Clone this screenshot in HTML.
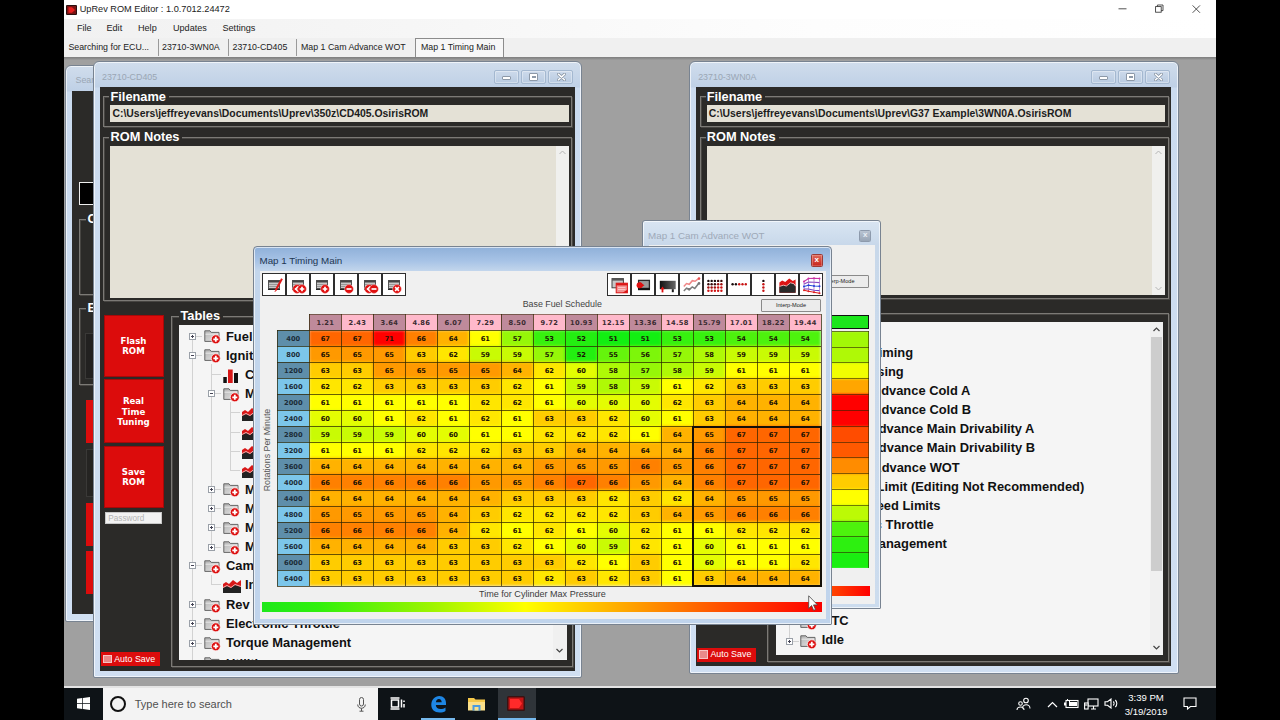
<!DOCTYPE html><html><head><meta charset="utf-8"><title>UpRev ROM Editor</title><style>
*{box-sizing:border-box;margin:0;padding:0}
html,body{width:1280px;height:720px;overflow:hidden;background:#000;font-family:"Liberation Sans",Arial,sans-serif}
.a{position:absolute}
.t{position:absolute;white-space:pre;line-height:1}
#screen{position:absolute;left:64px;top:0;width:1152px;height:720px;overflow:hidden;background:#a0a0a0}
#titlebar{left:0;top:0;width:1152px;height:19px;background:#fff}
#menubar{left:0;top:19px;width:1152px;height:19px;background:linear-gradient(90deg,#f1f1f1 0,#f6f6f6 30%,#fdfdfd 65%,#fff 100%)}
#tabbar{left:0;top:38px;width:1152px;height:19px;background:#f0f0f0}
.tab{position:absolute;top:0;height:19px;font-size:8.8px;color:#222;line-height:19px;white-space:pre}
.tsep{position:absolute;top:1px;width:1px;height:17px;background:#9a9a9a}
.win{position:absolute;border:1px solid #788391;border-radius:6px 6px 2px 2px;box-shadow:inset 0 0 0 1px rgba(255,255,255,.65)}
.win.in{background:linear-gradient(#d0ddec 0,#bfd0e6 25px,#cbdbef 26px,#d0dff2 100%)}
.win.act{background:linear-gradient(#8fb0d9 0,#a7c3e6 14px,#c3d6ec 24px,#c0d4ec 100%)}
.cap{position:absolute;border:1px solid #a4b8d0;border-radius:2px;background:linear-gradient(#cddaeb,#b9cbe1);box-shadow:inset 0 0 0 1px rgba(255,255,255,.35)}
.dark{position:absolute;background:#2b2a28;overflow:hidden}
.gb{position:absolute;border:1px solid #7c7a76;box-shadow:1px 1px 0 #474542, inset 1px 1px 0 #474542}
.gbl{position:absolute;background:#2b2a28;color:#fff;font-weight:700;font-size:12.8px;line-height:13px;height:13px;white-space:pre;padding:0 3px 0 1px}
.field{position:absolute;background:#e4e1d6}
.rbtn{position:absolute;background:#dc0c0c;color:#fff;font-family:"DejaVu Sans","Liberation Sans",sans-serif;font-weight:700;font-size:8.6px;line-height:10.9px;padding-right:2px;padding-top:1px;text-align:center;display:flex;align-items:center;justify-content:center;border:1px solid #a80808}
.tree{position:absolute;background:#f5f5f5;overflow:hidden}
.ti{position:absolute;font-weight:700;font-size:12.9px;line-height:14px;height:14px;color:#111;white-space:pre}
.exp{position:absolute;width:7px;height:7px;border:1px solid #9aa0a8;background:#fff}
.exp:before{content:"";position:absolute;left:1px;top:2px;width:3px;height:1px;background:#445}
.exp.p:after{content:"";position:absolute;left:2px;top:1px;width:1px;height:3px;background:#445}
.tb{position:absolute;width:24px;height:23.5px;background:#fff;border:1px solid #2e2e2e}
.cell{position:absolute;font-family:"DejaVu Sans","Liberation Sans",sans-serif;font-weight:700;font-size:6.7px;line-height:18.2px;overflow:hidden;text-align:center;color:#1c1204;white-space:pre}
</style></head><body><svg width="0" height="0" style="position:absolute"><defs><linearGradient id="fg" x1="0" y1="0" x2="1" y2="1"><stop offset="0" stop-color="#b4b4b4"/><stop offset="1" stop-color="#e6e6e6"/></linearGradient><linearGradient id="gk" x1="0" x2="1"><stop offset="0" stop-color="#111"/><stop offset="1" stop-color="#666"/></linearGradient></defs></svg><div id="screen">
<div class="a" id="titlebar">
<svg class="a" style="left:1.5px;top:4.5px" width="11" height="10" viewBox="0 0 11 10"><rect width="11" height="10" rx="1" fill="#2a1010"/><rect x="1" y="1" width="9" height="8" fill="#7a1414"/><path d="M2.5 2.2h3.5l3 2.8-3 2.8H2.5z" fill="#e82020"/></svg>
<div class="t" style="left:15.7px;top:5px;font-size:9.2px;color:#222">UpRev ROM Editor : 1.0.7012.24472</div>
<svg class="a" style="left:1010px;top:0" width="142" height="19" viewBox="0 0 142 19" fill="none" stroke="#333" stroke-width="0.85"><path d="M44.5 8.8h8"/><rect x="81.6" y="6.6" width="5.6" height="5.6"/><path d="M83.4 6.6v-1.6h5.6v5.6h-1.8"/><path d="M118.6 5.4l7.4 7.4M126 5.4l-7.4 7.4"/></svg>
</div>
<div class="a" id="menubar">
<div class="t" style="left:13px;top:5px;font-size:9.1px;color:#222">File</div>
<div class="t" style="left:42.5px;top:5px;font-size:9.1px;color:#222">Edit</div>
<div class="t" style="left:74px;top:5px;font-size:9.1px;color:#222">Help</div>
<div class="t" style="left:109px;top:5px;font-size:9.1px;color:#222">Updates</div>
<div class="t" style="left:158.5px;top:5px;font-size:9.1px;color:#222">Settings</div>
</div>
<div class="a" id="tabbar">
<div class="a" style="left:351px;top:0;width:89px;height:19px;background:#f7f7f7;border:1px solid #8c8c8c;border-bottom:none"></div>
<div class="tab" style="left:4.4px">Searching for ECU...</div>
<div class="tab" style="left:98px">23710-3WN0A</div>
<div class="tab" style="left:168.5px">23710-CD405</div>
<div class="tab" style="left:237px">Map 1 Cam Advance WOT</div>
<div class="tab" style="left:357px">Map 1 Timing Main</div>
<div class="tsep" style="left:93.5px"></div>
<div class="tsep" style="left:164px"></div>
<div class="tsep" style="left:232px"></div>
</div>
<div class="a" style="left:0;top:57px;width:1152px;height:3px;background:linear-gradient(#7e7e7e,#8e8e8e 60%,#a0a0a0)"></div>
<div class="win in" style="left:1.2px;top:65px;width:74.8px;height:557px">
<div class="t" style="left:9.3px;top:10.3px;font-size:8.9px;color:#9aa6b4">Searching for ECU...</div>
<div class="dark" style="left:6.3px;top:25px;width:61.8px;height:522.8px">
<div class="a" style="left:6.5px;top:91px;width:40px;height:23px;background:#000;border:1px solid #eee"></div>
<div class="gb" style="left:6.5px;top:127.5px;width:60px;height:76.5px"></div><div class="gbl" style="left:14.0px;top:121px">Connection</div>
<div class="gb" style="left:6.5px;top:216.5px;width:60px;height:77px"></div><div class="gbl" style="left:14.0px;top:209.8px">ECU</div>
<div class="a" style="left:12.5px;top:241.5px;width:40px;height:46.5px;background:#222120;border:1px solid #3a3937"></div>
<div class="a" style="left:13.5px;top:309px;width:40px;height:42.5px;background:#dc0c0c"></div>
<div class="a" style="left:13.5px;top:411.5px;width:40px;height:43.5px;background:#dc0c0c"></div>
<div class="a" style="left:13.5px;top:460px;width:40px;height:43px;background:#dc0c0c"></div>
<div class="a" style="left:13.5px;top:358px;width:40px;height:48px;background:#252422;border:1px solid #3a3937"></div>
</div></div>
<div class="win in" style="left:625px;top:60.8px;width:490px;height:612.8000000000001px">
<div class="t" style="left:8.2px;top:10.8px;font-size:8.9px;color:#9aa6b4">23710-3WN0A</div>
<div class="cap" style="left:400.8px;top:8.1px;width:25px;height:14.3px">
<div class="a" style="left:7.5px;top:5.5px;width:9px;height:3.6px;border:1px solid #8d99a8;background:#fff;border-radius:1px"></div>
</div>
<div class="cap" style="left:427.8px;top:8.1px;width:25px;height:14.3px">
<div class="a" style="left:7.5px;top:2.2px;width:9px;height:7.5px;border:1px solid #8d99a8;background:#fff;border-radius:1px"></div><div class="a" style="left:10px;top:4.8px;width:4px;height:2.6px;border:1px solid #8d99a8"></div>
</div>
<div class="cap" style="left:455px;top:8.1px;width:25px;height:14.3px">
<svg class="a" style="left:7.5px;top:2px" width="9" height="8" viewBox="0 0 9 8"><path d="M1.5 1.2l6 5.6M7.5 1.2l-6 5.6" stroke="#8d99a8" stroke-width="3" stroke-linecap="round"/><path d="M1.5 1.2l6 5.6M7.5 1.2l-6 5.6" stroke="#fff" stroke-width="1.5" stroke-linecap="round"/></svg>
</div>
<div class="dark" style="left:6.2px;top:25.1px;width:475.29999999999995px;height:579.5px">
<div class="gb" style="left:3.5px;top:9.5px;width:469.29999999999995px;height:31px"></div>
<div class="gbl" style="left:9.5px;top:3.0px">Filename</div>
<div class="field" style="left:10.5px;top:18.0px;width:458.79999999999995px;height:17.5px"><div class="t" style="left:2px;top:4.1px;font-size:10.42px;font-weight:700;color:#1c1c1c">C:\Users\jeffreyevans\Documents\Uprev\G37 Example\3WN0A.OsirisROM</div></div>
<div class="gb" style="left:3.5px;top:50.5px;width:469.29999999999995px;height:161.4px"></div>
<div class="gbl" style="left:9.5px;top:43.3px">ROM Notes</div>
<div class="field" style="left:10.5px;top:58.9px;width:458.79999999999995px;height:149.39999999999998px">
<div class="a" style="right:0;top:0;width:13px;height:149.39999999999998px;background:#f0f0ee"></div>
<svg class="a" style="right:3px;top:4px" width="7" height="5" viewBox="0 0 7 5"><path d="M.5 4l3-3 3 3" stroke="#b5b5b5" fill="none"/></svg><svg class="a" style="right:3px;bottom:4px" width="7" height="5" viewBox="0 0 7 5"><path d="M.5 1l3 3 3-3" stroke="#b5b5b5" fill="none"/></svg>
</div>
<div class="rbtn" style="left:4.5px;top:228.1px;width:60px;height:62px">Flash<br>ROM</div>
<div class="rbtn" style="left:4.5px;top:292.6px;width:60px;height:64.0px">Real<br>Time<br>Tuning</div>
<div class="rbtn" style="left:4.5px;top:359.1px;width:60px;height:62px">Save<br>ROM</div>
<div class="a" style="left:5.5px;top:425.6px;width:57px;height:11.5px;background:#f2f2f2;border:1px solid #c8c8c8"><div class="t" style="left:1.8px;top:1.8px;font-size:8.2px;color:#b4b4b4">Password</div></div>
<div class="a" style="left:1.2px;top:561.1px;width:58.8px;height:14px;background:#dc0c0c"><div class="a" style="left:2px;top:2.5px;width:8.5px;height:8.5px;background:#e98a8a;border:1px solid #f6c4c4"></div><div class="t" style="left:13px;top:2.5px;font-size:8.9px;color:#fff">Auto Save</div></div>
<div class="gb" style="left:71.0px;top:226.6px;width:402.29999999999995px;height:348.4px"></div>
<div class="gbl" style="left:79.5px;top:220.1px">Tables</div>
<div class="tree" style="left:79.5px;top:235.6px;width:387.79999999999995px;height:332.9px">
<div class="a" style="left:13px;top:11.5px;width:1px;height:306px;border-left:1px solid #d2d2d2"></div>
<div class="a" style="left:13px;top:12.199999999999989px;width:10px;height:1px;border-top:1px solid #d2d2d2"></div>
<div class="exp p" style="left:10.0px;top:9.2px"></div>
<svg class="a" style="left:24.5px;top:5.7px" width="17" height="15" viewBox="0 0 17 15"><path d="M.8 1.8h5.2l1.2 1.6H15v9H.8z" fill="url(#fg)" stroke="#666" stroke-width="1"/><path d="M1.5 5.2h13" stroke="#ececec" stroke-width=".9"/><circle cx="11.8" cy="10.3" r="4.5" fill="#dc1010" stroke="#fff" stroke-width=".7"/><path d="M9.3 10.3h5M11.8 7.8v5" stroke="#fff" stroke-width="1.8"/></svg>
<div class="ti" style="left:46.5px;top:4.5px">Fuel</div>
<div class="a" style="left:13px;top:31.19999999999999px;width:10px;height:1px;border-top:1px solid #d2d2d2"></div>
<div class="exp p" style="left:10.0px;top:28.2px"></div>
<svg class="a" style="left:24.5px;top:24.7px" width="17" height="15" viewBox="0 0 17 15"><path d="M.8 1.8h5.2l1.2 1.6H15v9H.8z" fill="url(#fg)" stroke="#666" stroke-width="1"/><path d="M1.5 5.2h13" stroke="#ececec" stroke-width=".9"/><circle cx="11.8" cy="10.3" r="4.5" fill="#dc1010" stroke="#fff" stroke-width=".7"/><path d="M9.3 10.3h5M11.8 7.8v5" stroke="#fff" stroke-width="1.8"/></svg>
<div class="ti" style="left:45.2px;top:23.5px">Ignition Timing</div>
<div class="a" style="left:13px;top:50.39999999999998px;width:10px;height:1px;border-top:1px solid #d2d2d2"></div>
<div class="exp " style="left:10.0px;top:47.4px"></div>
<svg class="a" style="left:24.5px;top:43.9px" width="17" height="15" viewBox="0 0 17 15"><path d="M.8 1.8h5.2l1.2 1.6H15v9H.8z" fill="url(#fg)" stroke="#666" stroke-width="1"/><path d="M1.5 5.2h13" stroke="#ececec" stroke-width=".9"/><circle cx="11.8" cy="10.3" r="4.5" fill="#dc1010" stroke="#fff" stroke-width=".7"/><path d="M9.3 10.3h5M11.8 7.8v5" stroke="#fff" stroke-width="1.8"/></svg>
<div class="ti" style="left:46.4px;top:42.7px">Cam Phasing</div>
<div class="a" style="left:32px;top:69.39999999999998px;width:10px;height:1px;border-top:1px solid #d2d2d2"></div>
<svg class="a" style="left:43.5px;top:62.9px" width="18" height="15" viewBox="0 0 18 15"><path d="M0 15V6l3-2 3 2 4-4 4 3 4-3v13z" fill="#d81818"/><path d="M0 15V10l4-2 4 2 4-3 6 2v6z" fill="#222"/><path d="M0 9.5l4-2 4 2 4-3 6 2" stroke="#f3b0b0" stroke-width="1" fill="none"/></svg>
<div class="ti" style="left:65.1px;top:61.7px">Cam Advance Cold A</div>
<div class="a" style="left:32px;top:88.5px;width:10px;height:1px;border-top:1px solid #d2d2d2"></div>
<svg class="a" style="left:43.5px;top:82.0px" width="18" height="15" viewBox="0 0 18 15"><path d="M0 15V6l3-2 3 2 4-4 4 3 4-3v13z" fill="#d81818"/><path d="M0 15V10l4-2 4 2 4-3 6 2v6z" fill="#222"/><path d="M0 9.5l4-2 4 2 4-3 6 2" stroke="#f3b0b0" stroke-width="1" fill="none"/></svg>
<div class="ti" style="left:65.5px;top:80.8px">Cam Advance Cold B</div>
<div class="a" style="left:32px;top:107.59999999999997px;width:10px;height:1px;border-top:1px solid #d2d2d2"></div>
<svg class="a" style="left:43.5px;top:101.1px" width="18" height="15" viewBox="0 0 18 15"><path d="M0 15V6l3-2 3 2 4-4 4 3 4-3v13z" fill="#d81818"/><path d="M0 15V10l4-2 4 2 4-3 6 2v6z" fill="#222"/><path d="M0 9.5l4-2 4 2 4-3 6 2" stroke="#f3b0b0" stroke-width="1" fill="none"/></svg>
<div class="ti" style="left:62.7px;top:99.9px">Cam Advance Main Drivability A</div>
<div class="a" style="left:32px;top:126.69999999999999px;width:10px;height:1px;border-top:1px solid #d2d2d2"></div>
<svg class="a" style="left:43.5px;top:120.2px" width="18" height="15" viewBox="0 0 18 15"><path d="M0 15V6l3-2 3 2 4-4 4 3 4-3v13z" fill="#d81818"/><path d="M0 15V10l4-2 4 2 4-3 6 2v6z" fill="#222"/><path d="M0 9.5l4-2 4 2 4-3 6 2" stroke="#f3b0b0" stroke-width="1" fill="none"/></svg>
<div class="ti" style="left:62.8px;top:119.0px">Cam Advance Main Drivability B</div>
<div class="a" style="left:32px;top:145.8px;width:10px;height:1px;border-top:1px solid #d2d2d2"></div>
<svg class="a" style="left:43.5px;top:139.3px" width="18" height="15" viewBox="0 0 18 15"><path d="M0 15V6l3-2 3 2 4-4 4 3 4-3v13z" fill="#d81818"/><path d="M0 15V10l4-2 4 2 4-3 6 2v6z" fill="#222"/><path d="M0 9.5l4-2 4 2 4-3 6 2" stroke="#f3b0b0" stroke-width="1" fill="none"/></svg>
<div class="ti" style="left:65.6px;top:138.1px">Cam Advance WOT</div>
<div class="a" style="left:32px;top:164.89999999999998px;width:10px;height:1px;border-top:1px solid #d2d2d2"></div>
<div class="exp p" style="left:29.0px;top:161.9px"></div>
<svg class="a" style="left:43.5px;top:158.4px" width="17" height="15" viewBox="0 0 17 15"><path d="M.8 1.8h5.2l1.2 1.6H15v9H.8z" fill="url(#fg)" stroke="#666" stroke-width="1"/><path d="M1.5 5.2h13" stroke="#ececec" stroke-width=".9"/><circle cx="11.8" cy="10.3" r="4.5" fill="#dc1010" stroke="#fff" stroke-width=".7"/><path d="M9.3 10.3h5M11.8 7.8v5" stroke="#fff" stroke-width="1.8"/></svg>
<div class="ti" style="left:73.7px;top:157.2px">Rev Limit (Editing Not Recommended)</div>
<div class="a" style="left:32px;top:184.0px;width:10px;height:1px;border-top:1px solid #d2d2d2"></div>
<div class="exp p" style="left:29.0px;top:181.0px"></div>
<svg class="a" style="left:43.5px;top:177.5px" width="17" height="15" viewBox="0 0 17 15"><path d="M.8 1.8h5.2l1.2 1.6H15v9H.8z" fill="url(#fg)" stroke="#666" stroke-width="1"/><path d="M1.5 5.2h13" stroke="#ececec" stroke-width=".9"/><circle cx="11.8" cy="10.3" r="4.5" fill="#dc1010" stroke="#fff" stroke-width=".7"/><path d="M9.3 10.3h5M11.8 7.8v5" stroke="#fff" stroke-width="1.8"/></svg>
<div class="ti" style="left:84.5px;top:176.3px">Speed Limits</div>
<div class="a" style="left:13px;top:203.10000000000002px;width:10px;height:1px;border-top:1px solid #d2d2d2"></div>
<div class="exp p" style="left:10.0px;top:200.1px"></div>
<svg class="a" style="left:24.5px;top:196.6px" width="17" height="15" viewBox="0 0 17 15"><path d="M.8 1.8h5.2l1.2 1.6H15v9H.8z" fill="url(#fg)" stroke="#666" stroke-width="1"/><path d="M1.5 5.2h13" stroke="#ececec" stroke-width=".9"/><circle cx="11.8" cy="10.3" r="4.5" fill="#dc1010" stroke="#fff" stroke-width=".7"/><path d="M9.3 10.3h5M11.8 7.8v5" stroke="#fff" stroke-width="1.8"/></svg>
<div class="ti" style="left:44.0px;top:195.4px">Electronic Throttle</div>
<div class="a" style="left:13px;top:222.20000000000005px;width:10px;height:1px;border-top:1px solid #d2d2d2"></div>
<div class="exp p" style="left:10.0px;top:219.2px"></div>
<svg class="a" style="left:24.5px;top:215.7px" width="17" height="15" viewBox="0 0 17 15"><path d="M.8 1.8h5.2l1.2 1.6H15v9H.8z" fill="url(#fg)" stroke="#666" stroke-width="1"/><path d="M1.5 5.2h13" stroke="#ececec" stroke-width=".9"/><circle cx="11.8" cy="10.3" r="4.5" fill="#dc1010" stroke="#fff" stroke-width=".7"/><path d="M9.3 10.3h5M11.8 7.8v5" stroke="#fff" stroke-width="1.8"/></svg>
<div class="ti" style="left:46.1px;top:214.5px">Torque Management</div>
<div class="a" style="left:13px;top:241.20000000000005px;width:10px;height:1px;border-top:1px solid #d2d2d2"></div>
<div class="exp p" style="left:10.0px;top:238.2px"></div>
<svg class="a" style="left:24.5px;top:234.7px" width="17" height="15" viewBox="0 0 17 15"><path d="M.8 1.8h5.2l1.2 1.6H15v9H.8z" fill="url(#fg)" stroke="#666" stroke-width="1"/><path d="M1.5 5.2h13" stroke="#ececec" stroke-width=".9"/><circle cx="11.8" cy="10.3" r="4.5" fill="#dc1010" stroke="#fff" stroke-width=".7"/><path d="M9.3 10.3h5M11.8 7.8v5" stroke="#fff" stroke-width="1.8"/></svg>
<div class="ti" style="left:46.5px;top:233.5px">Utilities</div>
<div class="a" style="left:13px;top:260.20000000000005px;width:10px;height:1px;border-top:1px solid #d2d2d2"></div>
<div class="exp p" style="left:10.0px;top:257.2px"></div>
<svg class="a" style="left:24.5px;top:253.7px" width="17" height="15" viewBox="0 0 17 15"><path d="M.8 1.8h5.2l1.2 1.6H15v9H.8z" fill="url(#fg)" stroke="#666" stroke-width="1"/><path d="M1.5 5.2h13" stroke="#ececec" stroke-width=".9"/><circle cx="11.8" cy="10.3" r="4.5" fill="#dc1010" stroke="#fff" stroke-width=".7"/><path d="M9.3 10.3h5M11.8 7.8v5" stroke="#fff" stroke-width="1.8"/></svg>
<div class="ti" style="left:46.5px;top:252.5px">Knock</div>
<div class="a" style="left:13px;top:279.70000000000005px;width:10px;height:1px;border-top:1px solid #d2d2d2"></div>
<div class="exp p" style="left:10.0px;top:276.7px"></div>
<svg class="a" style="left:24.5px;top:273.2px" width="17" height="15" viewBox="0 0 17 15"><path d="M.8 1.8h5.2l1.2 1.6H15v9H.8z" fill="url(#fg)" stroke="#666" stroke-width="1"/><path d="M1.5 5.2h13" stroke="#ececec" stroke-width=".9"/><circle cx="11.8" cy="10.3" r="4.5" fill="#dc1010" stroke="#fff" stroke-width=".7"/><path d="M9.3 10.3h5M11.8 7.8v5" stroke="#fff" stroke-width="1.8"/></svg>
<div class="ti" style="left:46.5px;top:272.0px">Misc</div>
<div class="a" style="left:13px;top:299.0px;width:10px;height:1px;border-top:1px solid #d2d2d2"></div>
<div class="exp p" style="left:10.0px;top:296.0px"></div>
<svg class="a" style="left:24.5px;top:292.5px" width="17" height="15" viewBox="0 0 17 15"><path d="M.8 1.8h5.2l1.2 1.6H15v9H.8z" fill="url(#fg)" stroke="#666" stroke-width="1"/><path d="M1.5 5.2h13" stroke="#ececec" stroke-width=".9"/><circle cx="11.8" cy="10.3" r="4.5" fill="#dc1010" stroke="#fff" stroke-width=".7"/><path d="M9.3 10.3h5M11.8 7.8v5" stroke="#fff" stroke-width="1.8"/></svg>
<div class="ti" style="left:46.5px;top:291.3px">DTC</div>
<div class="a" style="left:13px;top:318.20000000000005px;width:10px;height:1px;border-top:1px solid #d2d2d2"></div>
<div class="exp p" style="left:10.0px;top:315.2px"></div>
<svg class="a" style="left:24.5px;top:311.7px" width="17" height="15" viewBox="0 0 17 15"><path d="M.8 1.8h5.2l1.2 1.6H15v9H.8z" fill="url(#fg)" stroke="#666" stroke-width="1"/><path d="M1.5 5.2h13" stroke="#ececec" stroke-width=".9"/><circle cx="11.8" cy="10.3" r="4.5" fill="#dc1010" stroke="#fff" stroke-width=".7"/><path d="M9.3 10.3h5M11.8 7.8v5" stroke="#fff" stroke-width="1.8"/></svg>
<div class="ti" style="left:46.0px;top:310.5px">Idle</div>
<div class="a" style="right:0;top:0;width:13.5px;height:331.5px;background:#f0f0f0"></div>
<div class="a" style="right:1px;top:14.5px;width:11.5px;height:234px;background:#cdcdcd"></div>
<svg class="a" style="right:3px;top:5px" width="7" height="5" viewBox="0 0 7 5"><path d="M.5 4l3-3 3 3" stroke="#444" fill="none" stroke-width="1.2"/></svg><svg class="a" style="right:3px;bottom:5px" width="7" height="5" viewBox="0 0 7 5"><path d="M.5 1l3 3 3-3" stroke="#444" fill="none" stroke-width="1.2"/></svg>
</div>
</div></div>
<div class="win in" style="left:28.8px;top:60.8px;width:489.40000000000003px;height:617.6px">
<div class="t" style="left:8.2px;top:10.8px;font-size:8.9px;color:#9aa6b4">23710-CD405</div>
<div class="cap" style="left:400.2px;top:8.1px;width:25px;height:14.3px">
<div class="a" style="left:7.5px;top:5.5px;width:9px;height:3.6px;border:1px solid #8d99a8;background:#fff;border-radius:1px"></div>
</div>
<div class="cap" style="left:427.2px;top:8.1px;width:25px;height:14.3px">
<div class="a" style="left:7.5px;top:2.2px;width:9px;height:7.5px;border:1px solid #8d99a8;background:#fff;border-radius:1px"></div><div class="a" style="left:10px;top:4.8px;width:4px;height:2.6px;border:1px solid #8d99a8"></div>
</div>
<div class="cap" style="left:454.4px;top:8.1px;width:25px;height:14.3px">
<svg class="a" style="left:7.5px;top:2px" width="9" height="8" viewBox="0 0 9 8"><path d="M1.5 1.2l6 5.6M7.5 1.2l-6 5.6" stroke="#8d99a8" stroke-width="3" stroke-linecap="round"/><path d="M1.5 1.2l6 5.6M7.5 1.2l-6 5.6" stroke="#fff" stroke-width="1.5" stroke-linecap="round"/></svg>
</div>
<div class="dark" style="left:6.2px;top:25.1px;width:474.70000000000005px;height:584.3px">
<div class="gb" style="left:3.5px;top:9.5px;width:468.70000000000005px;height:31px"></div>
<div class="gbl" style="left:9.5px;top:3.0px">Filename</div>
<div class="field" style="left:10.5px;top:18.0px;width:458.20000000000005px;height:17.5px"><div class="t" style="left:2px;top:4.1px;font-size:10.42px;font-weight:700;color:#1c1c1c">C:\Users\jeffreyevans\Documents\Uprev\350z\CD405.OsirisROM</div></div>
<div class="gb" style="left:3.5px;top:50.5px;width:468.70000000000005px;height:163.9px"></div>
<div class="gbl" style="left:9.5px;top:43.3px">ROM Notes</div>
<div class="field" style="left:10.5px;top:58.9px;width:458.20000000000005px;height:151.89999999999998px">
<div class="a" style="right:0;top:0;width:13px;height:151.89999999999998px;background:#f0f0ee"></div>
<svg class="a" style="right:3px;top:4px" width="7" height="5" viewBox="0 0 7 5"><path d="M.5 4l3-3 3 3" stroke="#b5b5b5" fill="none"/></svg><svg class="a" style="right:3px;bottom:4px" width="7" height="5" viewBox="0 0 7 5"><path d="M.5 1l3 3 3-3" stroke="#b5b5b5" fill="none"/></svg>
</div>
<div class="rbtn" style="left:4.5px;top:228.1px;width:60px;height:62px">Flash<br>ROM</div>
<div class="rbtn" style="left:4.5px;top:292.6px;width:60px;height:64.0px">Real<br>Time<br>Tuning</div>
<div class="rbtn" style="left:4.5px;top:359.1px;width:60px;height:62px">Save<br>ROM</div>
<div class="a" style="left:5.5px;top:425.6px;width:57px;height:11.5px;background:#f2f2f2;border:1px solid #c8c8c8"><div class="t" style="left:1.8px;top:1.8px;font-size:8.2px;color:#b4b4b4">Password</div></div>
<div class="a" style="left:1.2px;top:565.6px;width:58.8px;height:14px;background:#dc0c0c"><div class="a" style="left:2px;top:2.5px;width:8.5px;height:8.5px;background:#e98a8a;border:1px solid #f6c4c4"></div><div class="t" style="left:13px;top:2.5px;font-size:8.9px;color:#fff">Auto Save</div></div>
<div class="gb" style="left:71.0px;top:229.1px;width:401.70000000000005px;height:350.69999999999993px"></div>
<div class="gbl" style="left:79.5px;top:222.6px">Tables</div>
<div class="tree" style="left:79.5px;top:238.1px;width:387.20000000000005px;height:335.19999999999993px">
<div class="a" style="left:13px;top:11px;width:1px;height:330px;border-left:1px solid #d2d2d2"></div>
<div class="a" style="left:32px;top:39px;width:1px;height:183px;border-left:1px solid #d2d2d2"></div>
<div class="a" style="left:51px;top:77px;width:1px;height:68px;border-left:1px solid #d2d2d2"></div>
<div class="a" style="left:32px;top:250px;width:1px;height:10px;border-left:1px solid #d2d2d2"></div>
<div class="a" style="right:0;top:0;width:13.5px;height:334.5px;background:#f0f0f0"></div>
<svg class="a" style="right:3.3px;top:323.5px" width="7" height="5" viewBox="0 0 7 5"><path d="M.5 1l3 3 3-3" stroke="#444" fill="none" stroke-width="1.2"/></svg>
<div class="a" style="left:13px;top:11px;width:10px;height:1px;border-top:1px solid #d2d2d2"></div>
<div class="exp p" style="left:10.0px;top:8px"></div>
<svg class="a" style="left:24.5px;top:4.5px" width="17" height="15" viewBox="0 0 17 15"><path d="M.8 1.8h5.2l1.2 1.6H15v9H.8z" fill="url(#fg)" stroke="#666" stroke-width="1"/><path d="M1.5 5.2h13" stroke="#ececec" stroke-width=".9"/><circle cx="11.8" cy="10.3" r="4.5" fill="#dc1010" stroke="#fff" stroke-width=".7"/><path d="M9.3 10.3h5M11.8 7.8v5" stroke="#fff" stroke-width="1.8"/></svg>
<div class="ti" style="left:46.5px;top:4.8px">Fuel</div>
<div class="a" style="left:13px;top:30px;width:10px;height:1px;border-top:1px solid #d2d2d2"></div>
<div class="exp " style="left:10.0px;top:27px"></div>
<svg class="a" style="left:24.5px;top:23.5px" width="17" height="15" viewBox="0 0 17 15"><path d="M.8 1.8h5.2l1.2 1.6H15v9H.8z" fill="url(#fg)" stroke="#666" stroke-width="1"/><path d="M1.5 5.2h13" stroke="#ececec" stroke-width=".9"/><circle cx="11.8" cy="10.3" r="4.5" fill="#dc1010" stroke="#fff" stroke-width=".7"/><path d="M9.3 10.3h5M11.8 7.8v5" stroke="#fff" stroke-width="1.8"/></svg>
<div class="ti" style="left:46.5px;top:23.8px">Ignition Timing</div>
<div class="a" style="left:32px;top:49.30000000000001px;width:10px;height:1px;border-top:1px solid #d2d2d2"></div>
<svg class="a" style="left:43.5px;top:42.8px" width="17" height="15" viewBox="0 0 17 15"><rect x=".3" y="9" width="3.5" height="6" fill="#111"/><rect x="5" y="1.5" width="4.7" height="13.5" fill="#d81818"/><rect x="11" y="5" width="4" height="10" fill="#111"/></svg>
<div class="ti" style="left:65.5px;top:43.1px">Cylinder Timing Trim</div>
<div class="a" style="left:32px;top:68.39999999999998px;width:10px;height:1px;border-top:1px solid #d2d2d2"></div>
<div class="exp " style="left:29.0px;top:65.4px"></div>
<svg class="a" style="left:43.5px;top:61.9px" width="17" height="15" viewBox="0 0 17 15"><path d="M.8 1.8h5.2l1.2 1.6H15v9H.8z" fill="url(#fg)" stroke="#666" stroke-width="1"/><path d="M1.5 5.2h13" stroke="#ececec" stroke-width=".9"/><circle cx="11.8" cy="10.3" r="4.5" fill="#dc1010" stroke="#fff" stroke-width=".7"/><path d="M9.3 10.3h5M11.8 7.8v5" stroke="#fff" stroke-width="1.8"/></svg>
<div class="ti" style="left:65.5px;top:62.2px">Main Timing</div>
<div class="a" style="left:51px;top:87.5px;width:10px;height:1px;border-top:1px solid #d2d2d2"></div>
<svg class="a" style="left:62.5px;top:81.0px" width="18" height="15" viewBox="0 0 18 15"><path d="M0 15V6l3-2 3 2 4-4 4 3 4-3v13z" fill="#d81818"/><path d="M0 15V10l4-2 4 2 4-3 6 2v6z" fill="#222"/><path d="M0 9.5l4-2 4 2 4-3 6 2" stroke="#f3b0b0" stroke-width="1" fill="none"/></svg>
<div class="ti" style="left:84.5px;top:81.3px">Map 1 Timing Main</div>
<div class="a" style="left:51px;top:106.60000000000002px;width:10px;height:1px;border-top:1px solid #d2d2d2"></div>
<svg class="a" style="left:62.5px;top:100.1px" width="18" height="15" viewBox="0 0 18 15"><path d="M0 15V6l3-2 3 2 4-4 4 3 4-3v13z" fill="#d81818"/><path d="M0 15V10l4-2 4 2 4-3 6 2v6z" fill="#222"/><path d="M0 9.5l4-2 4 2 4-3 6 2" stroke="#f3b0b0" stroke-width="1" fill="none"/></svg>
<div class="ti" style="left:84.5px;top:100.4px">Map 2 Timing Main</div>
<div class="a" style="left:51px;top:125.69999999999999px;width:10px;height:1px;border-top:1px solid #d2d2d2"></div>
<svg class="a" style="left:62.5px;top:119.2px" width="18" height="15" viewBox="0 0 18 15"><path d="M0 15V6l3-2 3 2 4-4 4 3 4-3v13z" fill="#d81818"/><path d="M0 15V10l4-2 4 2 4-3 6 2v6z" fill="#222"/><path d="M0 9.5l4-2 4 2 4-3 6 2" stroke="#f3b0b0" stroke-width="1" fill="none"/></svg>
<div class="ti" style="left:84.5px;top:119.5px">Map 3 Timing Main</div>
<div class="a" style="left:51px;top:144.8px;width:10px;height:1px;border-top:1px solid #d2d2d2"></div>
<svg class="a" style="left:62.5px;top:138.3px" width="18" height="15" viewBox="0 0 18 15"><path d="M0 15V6l3-2 3 2 4-4 4 3 4-3v13z" fill="#d81818"/><path d="M0 15V10l4-2 4 2 4-3 6 2v6z" fill="#222"/><path d="M0 9.5l4-2 4 2 4-3 6 2" stroke="#f3b0b0" stroke-width="1" fill="none"/></svg>
<div class="ti" style="left:84.5px;top:138.6px">Map 4 Timing Main</div>
<div class="a" style="left:32px;top:164px;width:10px;height:1px;border-top:1px solid #d2d2d2"></div>
<div class="exp p" style="left:29.0px;top:161px"></div>
<svg class="a" style="left:43.5px;top:157.5px" width="17" height="15" viewBox="0 0 17 15"><path d="M.8 1.8h5.2l1.2 1.6H15v9H.8z" fill="url(#fg)" stroke="#666" stroke-width="1"/><path d="M1.5 5.2h13" stroke="#ececec" stroke-width=".9"/><circle cx="11.8" cy="10.3" r="4.5" fill="#dc1010" stroke="#fff" stroke-width=".7"/><path d="M9.3 10.3h5M11.8 7.8v5" stroke="#fff" stroke-width="1.8"/></svg>
<div class="ti" style="left:65.5px;top:157.8px">Map 1 Timing</div>
<div class="a" style="left:32px;top:183.2px;width:10px;height:1px;border-top:1px solid #d2d2d2"></div>
<div class="exp p" style="left:29.0px;top:180.2px"></div>
<svg class="a" style="left:43.5px;top:176.7px" width="17" height="15" viewBox="0 0 17 15"><path d="M.8 1.8h5.2l1.2 1.6H15v9H.8z" fill="url(#fg)" stroke="#666" stroke-width="1"/><path d="M1.5 5.2h13" stroke="#ececec" stroke-width=".9"/><circle cx="11.8" cy="10.3" r="4.5" fill="#dc1010" stroke="#fff" stroke-width=".7"/><path d="M9.3 10.3h5M11.8 7.8v5" stroke="#fff" stroke-width="1.8"/></svg>
<div class="ti" style="left:65.5px;top:177.0px">Map 2 Timing</div>
<div class="a" style="left:32px;top:202.39999999999998px;width:10px;height:1px;border-top:1px solid #d2d2d2"></div>
<div class="exp p" style="left:29.0px;top:199.4px"></div>
<svg class="a" style="left:43.5px;top:195.9px" width="17" height="15" viewBox="0 0 17 15"><path d="M.8 1.8h5.2l1.2 1.6H15v9H.8z" fill="url(#fg)" stroke="#666" stroke-width="1"/><path d="M1.5 5.2h13" stroke="#ececec" stroke-width=".9"/><circle cx="11.8" cy="10.3" r="4.5" fill="#dc1010" stroke="#fff" stroke-width=".7"/><path d="M9.3 10.3h5M11.8 7.8v5" stroke="#fff" stroke-width="1.8"/></svg>
<div class="ti" style="left:65.5px;top:196.2px">Map 3 Timing</div>
<div class="a" style="left:32px;top:221.60000000000002px;width:10px;height:1px;border-top:1px solid #d2d2d2"></div>
<div class="exp p" style="left:29.0px;top:218.6px"></div>
<svg class="a" style="left:43.5px;top:215.1px" width="17" height="15" viewBox="0 0 17 15"><path d="M.8 1.8h5.2l1.2 1.6H15v9H.8z" fill="url(#fg)" stroke="#666" stroke-width="1"/><path d="M1.5 5.2h13" stroke="#ececec" stroke-width=".9"/><circle cx="11.8" cy="10.3" r="4.5" fill="#dc1010" stroke="#fff" stroke-width=".7"/><path d="M9.3 10.3h5M11.8 7.8v5" stroke="#fff" stroke-width="1.8"/></svg>
<div class="ti" style="left:65.5px;top:215.4px">Map 4 Timing</div>
<div class="a" style="left:13px;top:240.29999999999995px;width:10px;height:1px;border-top:1px solid #d2d2d2"></div>
<div class="exp " style="left:10.0px;top:237.3px"></div>
<svg class="a" style="left:24.5px;top:233.8px" width="17" height="15" viewBox="0 0 17 15"><path d="M.8 1.8h5.2l1.2 1.6H15v9H.8z" fill="url(#fg)" stroke="#666" stroke-width="1"/><path d="M1.5 5.2h13" stroke="#ececec" stroke-width=".9"/><circle cx="11.8" cy="10.3" r="4.5" fill="#dc1010" stroke="#fff" stroke-width=".7"/><path d="M9.3 10.3h5M11.8 7.8v5" stroke="#fff" stroke-width="1.8"/></svg>
<div class="ti" style="left:46.5px;top:234.1px">Cam Phasing</div>
<div class="a" style="left:32px;top:259.5px;width:10px;height:1px;border-top:1px solid #d2d2d2"></div>
<svg class="a" style="left:43.5px;top:253.0px" width="18" height="15" viewBox="0 0 18 15"><path d="M0 15V6l3-2 3 2 4-4 4 3 4-3v13z" fill="#d81818"/><path d="M0 15V10l4-2 4 2 4-3 6 2v6z" fill="#222"/><path d="M0 9.5l4-2 4 2 4-3 6 2" stroke="#f3b0b0" stroke-width="1" fill="none"/></svg>
<div class="ti" style="left:65.5px;top:253.3px">Intake Cam Advance</div>
<div class="a" style="left:13px;top:279.20000000000005px;width:10px;height:1px;border-top:1px solid #d2d2d2"></div>
<div class="exp p" style="left:10.0px;top:276.2px"></div>
<svg class="a" style="left:24.5px;top:272.7px" width="17" height="15" viewBox="0 0 17 15"><path d="M.8 1.8h5.2l1.2 1.6H15v9H.8z" fill="url(#fg)" stroke="#666" stroke-width="1"/><path d="M1.5 5.2h13" stroke="#ececec" stroke-width=".9"/><circle cx="11.8" cy="10.3" r="4.5" fill="#dc1010" stroke="#fff" stroke-width=".7"/><path d="M9.3 10.3h5M11.8 7.8v5" stroke="#fff" stroke-width="1.8"/></svg>
<div class="ti" style="left:46.5px;top:273.0px">Rev Limit</div>
<div class="a" style="left:13px;top:298.4px;width:10px;height:1px;border-top:1px solid #d2d2d2"></div>
<div class="exp p" style="left:10.0px;top:295.4px"></div>
<svg class="a" style="left:24.5px;top:291.9px" width="17" height="15" viewBox="0 0 17 15"><path d="M.8 1.8h5.2l1.2 1.6H15v9H.8z" fill="url(#fg)" stroke="#666" stroke-width="1"/><path d="M1.5 5.2h13" stroke="#ececec" stroke-width=".9"/><circle cx="11.8" cy="10.3" r="4.5" fill="#dc1010" stroke="#fff" stroke-width=".7"/><path d="M9.3 10.3h5M11.8 7.8v5" stroke="#fff" stroke-width="1.8"/></svg>
<div class="ti" style="left:46.5px;top:292.2px">Electronic Throttle</div>
<div class="a" style="left:13px;top:317.6px;width:10px;height:1px;border-top:1px solid #d2d2d2"></div>
<div class="exp p" style="left:10.0px;top:314.6px"></div>
<svg class="a" style="left:24.5px;top:311.1px" width="17" height="15" viewBox="0 0 17 15"><path d="M.8 1.8h5.2l1.2 1.6H15v9H.8z" fill="url(#fg)" stroke="#666" stroke-width="1"/><path d="M1.5 5.2h13" stroke="#ececec" stroke-width=".9"/><circle cx="11.8" cy="10.3" r="4.5" fill="#dc1010" stroke="#fff" stroke-width=".7"/><path d="M9.3 10.3h5M11.8 7.8v5" stroke="#fff" stroke-width="1.8"/></svg>
<div class="ti" style="left:46.5px;top:311.4px">Torque Management</div>
<div class="a" style="left:13px;top:337.79999999999995px;width:10px;height:1px;border-top:1px solid #d2d2d2"></div>
<div class="exp p" style="left:10.0px;top:334.8px"></div>
<svg class="a" style="left:24.5px;top:331.3px" width="17" height="15" viewBox="0 0 17 15"><path d="M.8 1.8h5.2l1.2 1.6H15v9H.8z" fill="url(#fg)" stroke="#666" stroke-width="1"/><path d="M1.5 5.2h13" stroke="#ececec" stroke-width=".9"/><circle cx="11.8" cy="10.3" r="4.5" fill="#dc1010" stroke="#fff" stroke-width=".7"/><path d="M9.3 10.3h5M11.8 7.8v5" stroke="#fff" stroke-width="1.8"/></svg>
<div class="ti" style="left:46.5px;top:331.6px">Utilities</div>
</div>
</div></div>
<div class="win in" style="left:577.6px;top:220px;width:239.69999999999993px;height:389.20000000000005px;border-radius:3px 3px 1px 1px;background:linear-gradient(#d9e5f2 0,#c8d8ea 24px,#ccdcee 100%)">
<div class="t" style="left:5.5px;top:10px;font-size:9.8px;color:#9ea9b8">Map 1 Cam Advance WOT</div>
<div class="a" style="left:216.89999999999998px;top:8.5px;width:12px;height:12.5px;background:linear-gradient(#b9c4d2,#98a5b6);border:1px solid #8d9aac;border-radius:1.5px"><div class="t" style="left:2.5px;top:.5px;font-size:8px;font-weight:700;color:#e8eef5">x</div></div>
<div class="a" style="left:6.0px;top:24px;width:226.39999999999998px;height:359.20000000000005px;background:#f0f0f0;overflow:hidden">
<div class="a" style="left:160.9px;top:29.5px;width:60px;height:13px;background:#ececec;border:1px solid #8a8a8a;border-radius:1px"><div class="t" style="left:0;width:58px;text-align:center;top:3px;font-size:5.6px;color:#222">Interp-Mode</div></div>
<div class="a" style="left:182.9px;top:70px;width:38px;height:13.5px;background:#1ce61c;border:1.5px solid #111"></div>
<div class="a" style="left:182.9px;top:86.2px;width:38px;height:237.3px;overflow:hidden"><div class="a" style="left:-4px;top:0;width:46px;height:237.3px;filter:blur(1.2px)">
<div class="a" style="left:0;top:0.00px;width:46px;height:15.92px;background:#a2f807"></div>
<div class="a" style="left:0;top:15.82px;width:46px;height:15.92px;background:#aff906"></div>
<div class="a" style="left:0;top:31.64px;width:46px;height:15.92px;background:#f1fe01"></div>
<div class="a" style="left:0;top:47.46px;width:46px;height:15.92px;background:#ffa600"></div>
<div class="a" style="left:0;top:63.28px;width:46px;height:15.92px;background:#ff0000"></div>
<div class="a" style="left:0;top:79.10px;width:46px;height:15.92px;background:#ff0000"></div>
<div class="a" style="left:0;top:94.92px;width:46px;height:15.92px;background:#ff4c00"></div>
<div class="a" style="left:0;top:110.74px;width:46px;height:15.92px;background:#ff5900"></div>
<div class="a" style="left:0;top:126.56px;width:46px;height:15.92px;background:#ff8c00"></div>
<div class="a" style="left:0;top:142.38px;width:46px;height:15.92px;background:#ffcc00"></div>
<div class="a" style="left:0;top:158.20px;width:46px;height:15.92px;background:#ffff00"></div>
<div class="a" style="left:0;top:174.02px;width:46px;height:15.92px;background:#bcfa05"></div>
<div class="a" style="left:0;top:189.84px;width:46px;height:15.92px;background:#4df20d"></div>
<div class="a" style="left:0;top:205.66px;width:46px;height:15.92px;background:#2df010"></div>
<div class="a" style="left:0;top:221.48px;width:46px;height:15.92px;background:#1aef11"></div>
</div>
<div class="a" style="left:0;top:-0.40px;width:38px;height:.9px;background:rgba(45,35,0,.6)"></div>
<div class="a" style="left:0;top:15.42px;width:38px;height:.9px;background:rgba(45,35,0,.6)"></div>
<div class="a" style="left:0;top:31.24px;width:38px;height:.9px;background:rgba(45,35,0,.6)"></div>
<div class="a" style="left:0;top:47.06px;width:38px;height:.9px;background:rgba(45,35,0,.6)"></div>
<div class="a" style="left:0;top:62.88px;width:38px;height:.9px;background:rgba(45,35,0,.6)"></div>
<div class="a" style="left:0;top:78.70px;width:38px;height:.9px;background:rgba(45,35,0,.6)"></div>
<div class="a" style="left:0;top:94.52px;width:38px;height:.9px;background:rgba(45,35,0,.6)"></div>
<div class="a" style="left:0;top:110.34px;width:38px;height:.9px;background:rgba(45,35,0,.6)"></div>
<div class="a" style="left:0;top:126.16px;width:38px;height:.9px;background:rgba(45,35,0,.6)"></div>
<div class="a" style="left:0;top:141.98px;width:38px;height:.9px;background:rgba(45,35,0,.6)"></div>
<div class="a" style="left:0;top:157.80px;width:38px;height:.9px;background:rgba(45,35,0,.6)"></div>
<div class="a" style="left:0;top:173.62px;width:38px;height:.9px;background:rgba(45,35,0,.6)"></div>
<div class="a" style="left:0;top:189.44px;width:38px;height:.9px;background:rgba(45,35,0,.6)"></div>
<div class="a" style="left:0;top:205.26px;width:38px;height:.9px;background:rgba(45,35,0,.6)"></div>
<div class="a" style="left:0;top:221.08px;width:38px;height:.9px;background:rgba(45,35,0,.6)"></div>
<div class="a" style="left:0;top:236.90px;width:38px;height:.9px;background:rgba(45,35,0,.6)"></div>
<div class="a" style="left:37px;top:0;width:.9px;height:237.3px;background:rgba(45,35,0,.6)"></div>
</div>
<div class="a" style="left:-48.6px;top:340.8px;width:270.29999999999995px;height:10px;background:linear-gradient(90deg,#18e618 0,#ffff00 50%,#ff7800 75%,#ff0000 100%)"></div>
</div></div>
<div class="win act" style="left:189px;top:245.6px;width:579.3px;height:379.4px;border-radius:4px 4px 1px 1px">
<div class="t" style="left:5.5px;top:9.9px;font-size:9.8px;color:#223652">Map 1 Timing Main</div>
<div class="a" style="left:557px;top:7.900000000000006px;width:12px;height:12.5px;background:linear-gradient(#e06a5a,#c8241c);border:1px solid #9c3a34;border-radius:1.5px;box-shadow:inset 0 0 0 .6px rgba(255,255,255,.4)"><div class="t" style="left:2.5px;top:.5px;font-size:8px;font-weight:700;color:#fff">x</div></div>
<div class="a" style="left:5.5px;top:24.900000000000006px;width:566.5px;height:347.5px;background:#f0f0f0;overflow:hidden">
<div class="tb" style="left:2.0px;top:1.5px"><svg class="a" style="left:5px;top:6px" width="13" height="10" viewBox="0 0 13 10"><rect x=".5" y=".5" width="11" height="8" fill="#c9c9c9" stroke="#555"/><rect x=".5" y=".5" width="11" height="2" fill="#444"/><path d="M1 4.5h10M1 6.5h10" stroke="#8a8a8a" stroke-width=".8"/><path d="M0 9.5h12" stroke="#222" stroke-width="1.2"/></svg><svg class="a" style="left:11px;top:4px" width="9" height="14" viewBox="0 0 9 14"><path d="M8 .8L1.5 12.5" stroke="#e01818" stroke-width="2"/><path d="M1.5 12.5L1 13.8" stroke="#e01818" stroke-width="1"/></svg></div>
<div class="tb" style="left:26.0px;top:1.5px"><svg class="a" style="left:5px;top:6px" width="13" height="10" viewBox="0 0 13 10"><rect x=".5" y=".5" width="11" height="8" fill="#c9c9c9" stroke="#555"/><rect x=".5" y=".5" width="11" height="2" fill="#444"/><path d="M1 4.5h10M1 6.5h10" stroke="#8a8a8a" stroke-width=".8"/><path d="M0 9.5h12" stroke="#222" stroke-width="1.2"/></svg><svg class="a" style="left:5.4px;top:9.7px" width="10" height="10" viewBox="-.5 -.5 10 10"><circle cx="4.5" cy="4.5" r="4.4" fill="#e01010" stroke="#f8d0d0" stroke-width=".5"/><path d="M5.8 2L3 4.5 5.8 7" stroke="#fff" stroke-width="1.6" fill="none"/></svg><svg class="a" style="left:10.9px;top:9.7px" width="10" height="10" viewBox="-.5 -.5 10 10"><circle cx="4.5" cy="4.5" r="4.4" fill="#e01010" stroke="#f8d0d0" stroke-width=".5"/><path d="M2.2 4.5h4.6M4.5 2.2v4.6" stroke="#fff" stroke-width="1.7"/></svg></div>
<div class="tb" style="left:50.0px;top:1.5px"><svg class="a" style="left:5px;top:6px" width="13" height="10" viewBox="0 0 13 10"><rect x=".5" y=".5" width="11" height="8" fill="#c9c9c9" stroke="#555"/><rect x=".5" y=".5" width="11" height="2" fill="#444"/><path d="M1 4.5h10M1 6.5h10" stroke="#8a8a8a" stroke-width=".8"/><path d="M0 9.5h12" stroke="#222" stroke-width="1.2"/></svg><svg class="a" style="left:9.4px;top:9.7px" width="10" height="10" viewBox="-.5 -.5 10 10"><circle cx="4.5" cy="4.5" r="4.4" fill="#e01010" stroke="#f8d0d0" stroke-width=".5"/><path d="M2.2 4.5h4.6M4.5 2.2v4.6" stroke="#fff" stroke-width="1.7"/></svg></div>
<div class="tb" style="left:74.0px;top:1.5px"><svg class="a" style="left:5px;top:6px" width="13" height="10" viewBox="0 0 13 10"><rect x=".5" y=".5" width="11" height="8" fill="#c9c9c9" stroke="#555"/><rect x=".5" y=".5" width="11" height="2" fill="#444"/><path d="M1 4.5h10M1 6.5h10" stroke="#8a8a8a" stroke-width=".8"/><path d="M0 9.5h12" stroke="#222" stroke-width="1.2"/></svg><svg class="a" style="left:9.4px;top:9.7px" width="10" height="10" viewBox="-.5 -.5 10 10"><circle cx="4.5" cy="4.5" r="4.4" fill="#e01010" stroke="#f8d0d0" stroke-width=".5"/><path d="M2 4.5h5" stroke="#fff" stroke-width="1.7"/></svg></div>
<div class="tb" style="left:98.0px;top:1.5px"><svg class="a" style="left:5px;top:6px" width="13" height="10" viewBox="0 0 13 10"><rect x=".5" y=".5" width="11" height="8" fill="#c9c9c9" stroke="#555"/><rect x=".5" y=".5" width="11" height="2" fill="#444"/><path d="M1 4.5h10M1 6.5h10" stroke="#8a8a8a" stroke-width=".8"/><path d="M0 9.5h12" stroke="#222" stroke-width="1.2"/></svg><svg class="a" style="left:5.4px;top:9.7px" width="10" height="10" viewBox="-.5 -.5 10 10"><circle cx="4.5" cy="4.5" r="4.4" fill="#e01010" stroke="#f8d0d0" stroke-width=".5"/><path d="M5.8 2L3 4.5 5.8 7" stroke="#fff" stroke-width="1.6" fill="none"/></svg><svg class="a" style="left:10.9px;top:9.7px" width="10" height="10" viewBox="-.5 -.5 10 10"><circle cx="4.5" cy="4.5" r="4.4" fill="#e01010" stroke="#f8d0d0" stroke-width=".5"/><path d="M2 4.5h5" stroke="#fff" stroke-width="1.7"/></svg></div>
<div class="tb" style="left:122.0px;top:1.5px"><svg class="a" style="left:5px;top:6px" width="13" height="10" viewBox="0 0 13 10"><rect x=".5" y=".5" width="11" height="8" fill="#c9c9c9" stroke="#555"/><rect x=".5" y=".5" width="11" height="2" fill="#444"/><path d="M1 4.5h10M1 6.5h10" stroke="#8a8a8a" stroke-width=".8"/><path d="M0 9.5h12" stroke="#222" stroke-width="1.2"/></svg><svg class="a" style="left:9.4px;top:9.7px" width="10" height="10" viewBox="-.5 -.5 10 10"><circle cx="4.5" cy="4.5" r="4.4" fill="#e01010" stroke="#f8d0d0" stroke-width=".5"/><path d="M2.6 2.6l3.8 3.8M6.4 2.6L2.6 6.4" stroke="#fff" stroke-width="1.5"/></svg></div>
<div class="tb" style="left:347.8px;top:1.5px"><svg class="a" style="left:0;top:0" width="22" height="21.5" viewBox="1 1 22 21.5"><rect x="5" y="5.6" width="11.4" height="9.2" fill="#c8c8c8" stroke="#444" stroke-width="1"/><rect x="5" y="5.6" width="11.4" height="2" fill="#555"/><rect x="9.2" y="10.2" width="11.2" height="9.6" fill="#f29090" stroke="#dc1818" stroke-width="1"/><rect x="9.2" y="10.2" width="11.2" height="2.2" fill="#dc1818"/><path d="M11 14.500h7.500M11 16.500h7.500" stroke="#fbd4d4" stroke-width=".8"/><path d="M15.500 19.800h4.900v-3z" fill="#d81010"/></svg></div>
<div class="tb" style="left:371.8px;top:1.5px"><svg class="a" style="left:0;top:0" width="22" height="21.5" viewBox="1 1 22 21.5"><rect x="7.600" y="7.400" width="10.800" height="8" fill="#9a9a9a" stroke="#2a2a2a" stroke-width="1.300"/><path d="M7 16.200h12" stroke="#111" stroke-width="2"/><circle cx="8.600" cy="12.200" r="3" fill="#e01010"/><path d="M8.500 9l5 3.200-5 3.200z" fill="#e01010"/></svg></div>
<div class="tb" style="left:395.8px;top:1.5px"><svg class="a" style="left:0;top:0" width="22" height="21.5" viewBox="1 1 22 21.5"><rect x="4.800" y="7.800" width="15.900" height="8.400" fill="url(#gk)"/><rect x="6.600" y="15.600" width="1.800" height="3.800" fill="#e01010"/><path d="M7.500 13.600l2 2.600h-4z" fill="#e01010"/><rect x="16.800" y="16.200" width="2" height="3" fill="#1a1a1a"/></svg></div>
<div class="tb" style="left:419.8px;top:1.5px"><svg class="a" style="left:0;top:0" width="22" height="21.5" viewBox="1 1 22 21.5"><g fill="none"><path d="M4.800 13.500l2.700-3 2.800.8 3-3.600 2.800.6 3.800-3" stroke="#f08888" stroke-width="1.500"/><path d="M4.800 18l2.800-2.800 2.800 1.300 2.800-2.600 2.600 1.600 3.800-5" stroke="#7c7c7c" stroke-width="1.500"/></g><circle cx="20" cy="5.600" r="1.300" fill="#e85050"/><circle cx="20" cy="10.400" r="1.300" fill="#777"/><circle cx="10" cy="16.300" r="1.200" fill="#777"/></svg></div>
<div class="tb" style="left:443.8px;top:1.5px"><svg class="a" style="left:0;top:0" width="22" height="21.5" viewBox="1 1 22 21.5"><circle cx="5.40" cy="7.90" r="1.2" fill="#1a0c0c"/><circle cx="5.40" cy="11.18" r="1.2" fill="#3a0c0c"/><circle cx="5.40" cy="14.46" r="1.2" fill="#a01010"/><circle cx="5.40" cy="17.74" r="1.2" fill="#d01414"/><circle cx="8.65" cy="7.90" r="1.2" fill="#1a0c0c"/><circle cx="8.65" cy="11.18" r="1.2" fill="#3a0c0c"/><circle cx="8.65" cy="14.46" r="1.2" fill="#a01010"/><circle cx="8.65" cy="17.74" r="1.2" fill="#d01414"/><circle cx="11.90" cy="7.90" r="1.2" fill="#1a0c0c"/><circle cx="11.90" cy="11.18" r="1.2" fill="#3a0c0c"/><circle cx="11.90" cy="14.46" r="1.2" fill="#a01010"/><circle cx="11.90" cy="17.74" r="1.2" fill="#d01414"/><circle cx="15.15" cy="7.90" r="1.2" fill="#3a0c0c"/><circle cx="15.15" cy="11.18" r="1.2" fill="#a01010"/><circle cx="15.15" cy="14.46" r="1.2" fill="#d01414"/><circle cx="15.15" cy="17.74" r="1.2" fill="#d01414"/><circle cx="18.40" cy="7.90" r="1.2" fill="#3a0c0c"/><circle cx="18.40" cy="11.18" r="1.2" fill="#a01010"/><circle cx="18.40" cy="14.46" r="1.2" fill="#d01414"/><circle cx="18.40" cy="17.74" r="1.2" fill="#d01414"/></svg></div>
<div class="tb" style="left:467.8px;top:1.5px"><svg class="a" style="left:0;top:0" width="22" height="21.5" viewBox="1 1 22 21.5"><circle cx="5.60" cy="11.2" r="1.2" fill="#1a0c0c"/><circle cx="8.90" cy="11.2" r="1.2" fill="#1a0c0c"/><circle cx="12.20" cy="11.2" r="1.2" fill="#c81414"/><circle cx="15.50" cy="11.2" r="1.2" fill="#c81414"/><circle cx="18.80" cy="11.2" r="1.2" fill="#c81414"/></svg></div>
<div class="tb" style="left:491.8px;top:1.5px"><svg class="a" style="left:0;top:0" width="22" height="21.5" viewBox="1 1 22 21.5"><circle cx="12.4" cy="7.90" r="1.2" fill="#1a0c0c"/><circle cx="12.4" cy="11.18" r="1.2" fill="#c81414"/><circle cx="12.4" cy="14.46" r="1.2" fill="#c81414"/><circle cx="12.4" cy="17.74" r="1.2" fill="#c81414"/></svg></div>
<div class="tb" style="left:515.8px;top:1.5px"><svg class="a" style="left:0;top:0" width="22" height="21.5" viewBox="1 1 22 21.5"><path d="M4.400 19.800V9.500l2.800-2 3 1.600 4-3.500 3.600 2.400 2.800-1.600v13.400z" fill="#dc1414"/><path d="M4.400 19.800v-6.400l4-1.200 3 .8 4.200-3.200 3.400 1 1.600 2.400v6.600z" fill="#2a2a2a"/><path d="M4.400 13.400l4-1.200 3 .8 4.200-3.200 3.400 1 1.600 2.400" stroke="#f6c0c0" stroke-width=".9" fill="none"/></svg></div>
<div class="tb" style="left:539.8px;top:1.5px"><svg class="a" style="left:0;top:0" width="22" height="21.5" viewBox="1 1 22 21.5"><g fill="none" stroke-width="1.100"><path d="M5 8.500l4.500-3 5.500-.3 5.500.3" stroke="#c838a8"/><path d="M5 11l4.500-2 5.500.2 5.500.4" stroke="#8848c0"/><path d="M5 13.500l4.500-1.200 5.500.7 5.500.2" stroke="#2848d8"/><path d="M5 16l4.500 0 5.500 1.200 5.500.4" stroke="#7040c0"/><path d="M5 17.200l4.500 1 5.500 1 5.500 1" stroke="#e02020"/><path d="M5 8.500v8.700M9.500 5.500v12.700M15 5.200v14M20.500 5.500v14.700" stroke="#a060c8" stroke-width=".7"/></g><g fill="#d030a0"><circle cx="9.500" cy="5.500" r="1"/><circle cx="15" cy="5.200" r="1"/><circle cx="20.500" cy="5.500" r="1"/><circle cx="5" cy="8.500" r="1"/></g><g fill="#2040d8"><circle cx="5" cy="13.500" r="1"/><circle cx="9.500" cy="12.300" r="1"/><circle cx="15" cy="13" r="1"/><circle cx="20.500" cy="13.200" r="1"/></g><g fill="#e02020"><circle cx="5" cy="17.200" r="1"/><circle cx="9.500" cy="18.200" r="1"/><circle cx="15" cy="19.200" r="1"/><circle cx="20.500" cy="20.200" r="1"/></g></svg></div>
<div class="a" style="left:501.5px;top:28.0px;width:60px;height:13px;background:#ececec;border:1px solid #8a8a8a;border-radius:1px"><div class="t" style="left:0;width:58px;text-align:center;top:3px;font-size:5.6px;color:#222">Interp-Mode</div></div>
<div class="t" style="left:263.2px;top:28.5px;font-size:8.85px;color:#444">Base Fuel Schedule</div>
<div class="t" style="left:7.8px;top:178.5px;font-size:8.85px;color:#555;transform:translate(-50%,-50%) rotate(-90deg)">Rotations Per Minute</div>
<div class="t" style="left:219.5px;top:318.5px;font-size:9.05px;color:#3c3c3c">Time for Cylinder Max Pressure</div>
<div class="a" style="left:49.8px;top:58.8px;width:512px;height:256px;overflow:hidden"><div class="a" style="left:0;top:0;width:512px;height:256px;filter:blur(1.6px)">
<div class="a" style="left:0px;top:0px;width:32px;height:16px;background:#ff6600"></div>
<div class="a" style="left:32px;top:0px;width:32px;height:16px;background:#ff6600"></div>
<div class="a" style="left:64px;top:0px;width:32px;height:16px;background:#ff0000"></div>
<div class="a" style="left:96px;top:0px;width:32px;height:16px;background:#ff8000"></div>
<div class="a" style="left:128px;top:0px;width:32px;height:16px;background:#ffb200"></div>
<div class="a" style="left:160px;top:0px;width:32px;height:16px;background:#ffff00"></div>
<div class="a" style="left:192px;top:0px;width:32px;height:16px;background:#96f708"></div>
<div class="a" style="left:224px;top:0px;width:32px;height:16px;background:#37f10f"></div>
<div class="a" style="left:256px;top:0px;width:32px;height:16px;background:#23ef11"></div>
<div class="a" style="left:288px;top:0px;width:32px;height:16px;background:#12ee12"></div>
<div class="a" style="left:320px;top:0px;width:32px;height:16px;background:#12ee12"></div>
<div class="a" style="left:352px;top:0px;width:32px;height:16px;background:#37f10f"></div>
<div class="a" style="left:384px;top:0px;width:32px;height:16px;background:#37f10f"></div>
<div class="a" style="left:416px;top:0px;width:32px;height:16px;background:#4df20d"></div>
<div class="a" style="left:448px;top:0px;width:32px;height:16px;background:#4df20d"></div>
<div class="a" style="left:480px;top:0px;width:32px;height:16px;background:#4df20d"></div>
<div class="a" style="left:0px;top:16px;width:32px;height:16px;background:#ff9900"></div>
<div class="a" style="left:32px;top:16px;width:32px;height:16px;background:#ff9900"></div>
<div class="a" style="left:64px;top:16px;width:32px;height:16px;background:#ff9900"></div>
<div class="a" style="left:96px;top:16px;width:32px;height:16px;background:#ffcc00"></div>
<div class="a" style="left:128px;top:16px;width:32px;height:16px;background:#ffe600"></div>
<div class="a" style="left:160px;top:16px;width:32px;height:16px;background:#c9fb04"></div>
<div class="a" style="left:192px;top:16px;width:32px;height:16px;background:#c9fb04"></div>
<div class="a" style="left:224px;top:16px;width:32px;height:16px;background:#96f708"></div>
<div class="a" style="left:256px;top:16px;width:32px;height:16px;background:#23ef11"></div>
<div class="a" style="left:288px;top:16px;width:32px;height:16px;background:#65f40c"></div>
<div class="a" style="left:320px;top:16px;width:32px;height:16px;background:#7df60a"></div>
<div class="a" style="left:352px;top:16px;width:32px;height:16px;background:#96f708"></div>
<div class="a" style="left:384px;top:16px;width:32px;height:16px;background:#aff906"></div>
<div class="a" style="left:416px;top:16px;width:32px;height:16px;background:#c9fb04"></div>
<div class="a" style="left:448px;top:16px;width:32px;height:16px;background:#c9fb04"></div>
<div class="a" style="left:480px;top:16px;width:32px;height:16px;background:#c9fb04"></div>
<div class="a" style="left:0px;top:32px;width:32px;height:16px;background:#ffcc00"></div>
<div class="a" style="left:32px;top:32px;width:32px;height:16px;background:#ffcc00"></div>
<div class="a" style="left:64px;top:32px;width:32px;height:16px;background:#ff9900"></div>
<div class="a" style="left:96px;top:32px;width:32px;height:16px;background:#ff9900"></div>
<div class="a" style="left:128px;top:32px;width:32px;height:16px;background:#ff9900"></div>
<div class="a" style="left:160px;top:32px;width:32px;height:16px;background:#ff9900"></div>
<div class="a" style="left:192px;top:32px;width:32px;height:16px;background:#ffb200"></div>
<div class="a" style="left:224px;top:32px;width:32px;height:16px;background:#ffe600"></div>
<div class="a" style="left:256px;top:32px;width:32px;height:16px;background:#e4fd02"></div>
<div class="a" style="left:288px;top:32px;width:32px;height:16px;background:#aff906"></div>
<div class="a" style="left:320px;top:32px;width:32px;height:16px;background:#96f708"></div>
<div class="a" style="left:352px;top:32px;width:32px;height:16px;background:#aff906"></div>
<div class="a" style="left:384px;top:32px;width:32px;height:16px;background:#c9fb04"></div>
<div class="a" style="left:416px;top:32px;width:32px;height:16px;background:#ffff00"></div>
<div class="a" style="left:448px;top:32px;width:32px;height:16px;background:#ffff00"></div>
<div class="a" style="left:480px;top:32px;width:32px;height:16px;background:#ffff00"></div>
<div class="a" style="left:0px;top:48px;width:32px;height:16px;background:#ffe600"></div>
<div class="a" style="left:32px;top:48px;width:32px;height:16px;background:#ffe600"></div>
<div class="a" style="left:64px;top:48px;width:32px;height:16px;background:#ffcc00"></div>
<div class="a" style="left:96px;top:48px;width:32px;height:16px;background:#ffcc00"></div>
<div class="a" style="left:128px;top:48px;width:32px;height:16px;background:#ffcc00"></div>
<div class="a" style="left:160px;top:48px;width:32px;height:16px;background:#ffcc00"></div>
<div class="a" style="left:192px;top:48px;width:32px;height:16px;background:#ffe600"></div>
<div class="a" style="left:224px;top:48px;width:32px;height:16px;background:#ffff00"></div>
<div class="a" style="left:256px;top:48px;width:32px;height:16px;background:#c9fb04"></div>
<div class="a" style="left:288px;top:48px;width:32px;height:16px;background:#aff906"></div>
<div class="a" style="left:320px;top:48px;width:32px;height:16px;background:#c9fb04"></div>
<div class="a" style="left:352px;top:48px;width:32px;height:16px;background:#ffff00"></div>
<div class="a" style="left:384px;top:48px;width:32px;height:16px;background:#ffe600"></div>
<div class="a" style="left:416px;top:48px;width:32px;height:16px;background:#ffcc00"></div>
<div class="a" style="left:448px;top:48px;width:32px;height:16px;background:#ffcc00"></div>
<div class="a" style="left:480px;top:48px;width:32px;height:16px;background:#ffcc00"></div>
<div class="a" style="left:0px;top:64px;width:32px;height:16px;background:#ffff00"></div>
<div class="a" style="left:32px;top:64px;width:32px;height:16px;background:#ffff00"></div>
<div class="a" style="left:64px;top:64px;width:32px;height:16px;background:#ffff00"></div>
<div class="a" style="left:96px;top:64px;width:32px;height:16px;background:#ffff00"></div>
<div class="a" style="left:128px;top:64px;width:32px;height:16px;background:#ffff00"></div>
<div class="a" style="left:160px;top:64px;width:32px;height:16px;background:#ffe600"></div>
<div class="a" style="left:192px;top:64px;width:32px;height:16px;background:#ffe600"></div>
<div class="a" style="left:224px;top:64px;width:32px;height:16px;background:#ffff00"></div>
<div class="a" style="left:256px;top:64px;width:32px;height:16px;background:#e4fd02"></div>
<div class="a" style="left:288px;top:64px;width:32px;height:16px;background:#e4fd02"></div>
<div class="a" style="left:320px;top:64px;width:32px;height:16px;background:#e4fd02"></div>
<div class="a" style="left:352px;top:64px;width:32px;height:16px;background:#ffe600"></div>
<div class="a" style="left:384px;top:64px;width:32px;height:16px;background:#ffcc00"></div>
<div class="a" style="left:416px;top:64px;width:32px;height:16px;background:#ffb200"></div>
<div class="a" style="left:448px;top:64px;width:32px;height:16px;background:#ffb200"></div>
<div class="a" style="left:480px;top:64px;width:32px;height:16px;background:#ffb200"></div>
<div class="a" style="left:0px;top:80px;width:32px;height:16px;background:#e4fd02"></div>
<div class="a" style="left:32px;top:80px;width:32px;height:16px;background:#e4fd02"></div>
<div class="a" style="left:64px;top:80px;width:32px;height:16px;background:#ffff00"></div>
<div class="a" style="left:96px;top:80px;width:32px;height:16px;background:#ffe600"></div>
<div class="a" style="left:128px;top:80px;width:32px;height:16px;background:#ffff00"></div>
<div class="a" style="left:160px;top:80px;width:32px;height:16px;background:#ffe600"></div>
<div class="a" style="left:192px;top:80px;width:32px;height:16px;background:#ffff00"></div>
<div class="a" style="left:224px;top:80px;width:32px;height:16px;background:#ffcc00"></div>
<div class="a" style="left:256px;top:80px;width:32px;height:16px;background:#ffcc00"></div>
<div class="a" style="left:288px;top:80px;width:32px;height:16px;background:#ffe600"></div>
<div class="a" style="left:320px;top:80px;width:32px;height:16px;background:#e4fd02"></div>
<div class="a" style="left:352px;top:80px;width:32px;height:16px;background:#ffff00"></div>
<div class="a" style="left:384px;top:80px;width:32px;height:16px;background:#ffcc00"></div>
<div class="a" style="left:416px;top:80px;width:32px;height:16px;background:#ffb200"></div>
<div class="a" style="left:448px;top:80px;width:32px;height:16px;background:#ffb200"></div>
<div class="a" style="left:480px;top:80px;width:32px;height:16px;background:#ffb200"></div>
<div class="a" style="left:0px;top:96px;width:32px;height:16px;background:#c9fb04"></div>
<div class="a" style="left:32px;top:96px;width:32px;height:16px;background:#c9fb04"></div>
<div class="a" style="left:64px;top:96px;width:32px;height:16px;background:#c9fb04"></div>
<div class="a" style="left:96px;top:96px;width:32px;height:16px;background:#e4fd02"></div>
<div class="a" style="left:128px;top:96px;width:32px;height:16px;background:#e4fd02"></div>
<div class="a" style="left:160px;top:96px;width:32px;height:16px;background:#ffff00"></div>
<div class="a" style="left:192px;top:96px;width:32px;height:16px;background:#ffff00"></div>
<div class="a" style="left:224px;top:96px;width:32px;height:16px;background:#ffe600"></div>
<div class="a" style="left:256px;top:96px;width:32px;height:16px;background:#ffe600"></div>
<div class="a" style="left:288px;top:96px;width:32px;height:16px;background:#ffe600"></div>
<div class="a" style="left:320px;top:96px;width:32px;height:16px;background:#ffff00"></div>
<div class="a" style="left:352px;top:96px;width:32px;height:16px;background:#ffb200"></div>
<div class="a" style="left:384px;top:96px;width:32px;height:16px;background:#ff9900"></div>
<div class="a" style="left:416px;top:96px;width:32px;height:16px;background:#ff6600"></div>
<div class="a" style="left:448px;top:96px;width:32px;height:16px;background:#ff6600"></div>
<div class="a" style="left:480px;top:96px;width:32px;height:16px;background:#ff6600"></div>
<div class="a" style="left:0px;top:112px;width:32px;height:16px;background:#ffff00"></div>
<div class="a" style="left:32px;top:112px;width:32px;height:16px;background:#ffff00"></div>
<div class="a" style="left:64px;top:112px;width:32px;height:16px;background:#ffff00"></div>
<div class="a" style="left:96px;top:112px;width:32px;height:16px;background:#ffe600"></div>
<div class="a" style="left:128px;top:112px;width:32px;height:16px;background:#ffe600"></div>
<div class="a" style="left:160px;top:112px;width:32px;height:16px;background:#ffe600"></div>
<div class="a" style="left:192px;top:112px;width:32px;height:16px;background:#ffcc00"></div>
<div class="a" style="left:224px;top:112px;width:32px;height:16px;background:#ffcc00"></div>
<div class="a" style="left:256px;top:112px;width:32px;height:16px;background:#ffb200"></div>
<div class="a" style="left:288px;top:112px;width:32px;height:16px;background:#ffb200"></div>
<div class="a" style="left:320px;top:112px;width:32px;height:16px;background:#ffb200"></div>
<div class="a" style="left:352px;top:112px;width:32px;height:16px;background:#ffb200"></div>
<div class="a" style="left:384px;top:112px;width:32px;height:16px;background:#ff8000"></div>
<div class="a" style="left:416px;top:112px;width:32px;height:16px;background:#ff6600"></div>
<div class="a" style="left:448px;top:112px;width:32px;height:16px;background:#ff6600"></div>
<div class="a" style="left:480px;top:112px;width:32px;height:16px;background:#ff6600"></div>
<div class="a" style="left:0px;top:128px;width:32px;height:16px;background:#ffb200"></div>
<div class="a" style="left:32px;top:128px;width:32px;height:16px;background:#ffb200"></div>
<div class="a" style="left:64px;top:128px;width:32px;height:16px;background:#ffb200"></div>
<div class="a" style="left:96px;top:128px;width:32px;height:16px;background:#ffb200"></div>
<div class="a" style="left:128px;top:128px;width:32px;height:16px;background:#ffb200"></div>
<div class="a" style="left:160px;top:128px;width:32px;height:16px;background:#ffb200"></div>
<div class="a" style="left:192px;top:128px;width:32px;height:16px;background:#ffb200"></div>
<div class="a" style="left:224px;top:128px;width:32px;height:16px;background:#ff9900"></div>
<div class="a" style="left:256px;top:128px;width:32px;height:16px;background:#ff9900"></div>
<div class="a" style="left:288px;top:128px;width:32px;height:16px;background:#ff9900"></div>
<div class="a" style="left:320px;top:128px;width:32px;height:16px;background:#ff8000"></div>
<div class="a" style="left:352px;top:128px;width:32px;height:16px;background:#ff9900"></div>
<div class="a" style="left:384px;top:128px;width:32px;height:16px;background:#ff8000"></div>
<div class="a" style="left:416px;top:128px;width:32px;height:16px;background:#ff6600"></div>
<div class="a" style="left:448px;top:128px;width:32px;height:16px;background:#ff6600"></div>
<div class="a" style="left:480px;top:128px;width:32px;height:16px;background:#ff6600"></div>
<div class="a" style="left:0px;top:144px;width:32px;height:16px;background:#ff8000"></div>
<div class="a" style="left:32px;top:144px;width:32px;height:16px;background:#ff8000"></div>
<div class="a" style="left:64px;top:144px;width:32px;height:16px;background:#ff8000"></div>
<div class="a" style="left:96px;top:144px;width:32px;height:16px;background:#ff8000"></div>
<div class="a" style="left:128px;top:144px;width:32px;height:16px;background:#ff8000"></div>
<div class="a" style="left:160px;top:144px;width:32px;height:16px;background:#ff9900"></div>
<div class="a" style="left:192px;top:144px;width:32px;height:16px;background:#ff9900"></div>
<div class="a" style="left:224px;top:144px;width:32px;height:16px;background:#ff8000"></div>
<div class="a" style="left:256px;top:144px;width:32px;height:16px;background:#ff6600"></div>
<div class="a" style="left:288px;top:144px;width:32px;height:16px;background:#ff8000"></div>
<div class="a" style="left:320px;top:144px;width:32px;height:16px;background:#ff9900"></div>
<div class="a" style="left:352px;top:144px;width:32px;height:16px;background:#ffb200"></div>
<div class="a" style="left:384px;top:144px;width:32px;height:16px;background:#ff8000"></div>
<div class="a" style="left:416px;top:144px;width:32px;height:16px;background:#ff6600"></div>
<div class="a" style="left:448px;top:144px;width:32px;height:16px;background:#ff6600"></div>
<div class="a" style="left:480px;top:144px;width:32px;height:16px;background:#ff6600"></div>
<div class="a" style="left:0px;top:160px;width:32px;height:16px;background:#ffb200"></div>
<div class="a" style="left:32px;top:160px;width:32px;height:16px;background:#ffb200"></div>
<div class="a" style="left:64px;top:160px;width:32px;height:16px;background:#ffb200"></div>
<div class="a" style="left:96px;top:160px;width:32px;height:16px;background:#ffb200"></div>
<div class="a" style="left:128px;top:160px;width:32px;height:16px;background:#ffb200"></div>
<div class="a" style="left:160px;top:160px;width:32px;height:16px;background:#ffb200"></div>
<div class="a" style="left:192px;top:160px;width:32px;height:16px;background:#ffcc00"></div>
<div class="a" style="left:224px;top:160px;width:32px;height:16px;background:#ffcc00"></div>
<div class="a" style="left:256px;top:160px;width:32px;height:16px;background:#ffcc00"></div>
<div class="a" style="left:288px;top:160px;width:32px;height:16px;background:#ffe600"></div>
<div class="a" style="left:320px;top:160px;width:32px;height:16px;background:#ffcc00"></div>
<div class="a" style="left:352px;top:160px;width:32px;height:16px;background:#ffe600"></div>
<div class="a" style="left:384px;top:160px;width:32px;height:16px;background:#ffb200"></div>
<div class="a" style="left:416px;top:160px;width:32px;height:16px;background:#ff9900"></div>
<div class="a" style="left:448px;top:160px;width:32px;height:16px;background:#ff9900"></div>
<div class="a" style="left:480px;top:160px;width:32px;height:16px;background:#ff9900"></div>
<div class="a" style="left:0px;top:176px;width:32px;height:16px;background:#ff9900"></div>
<div class="a" style="left:32px;top:176px;width:32px;height:16px;background:#ff9900"></div>
<div class="a" style="left:64px;top:176px;width:32px;height:16px;background:#ff9900"></div>
<div class="a" style="left:96px;top:176px;width:32px;height:16px;background:#ff9900"></div>
<div class="a" style="left:128px;top:176px;width:32px;height:16px;background:#ffb200"></div>
<div class="a" style="left:160px;top:176px;width:32px;height:16px;background:#ffcc00"></div>
<div class="a" style="left:192px;top:176px;width:32px;height:16px;background:#ffe600"></div>
<div class="a" style="left:224px;top:176px;width:32px;height:16px;background:#ffe600"></div>
<div class="a" style="left:256px;top:176px;width:32px;height:16px;background:#ffe600"></div>
<div class="a" style="left:288px;top:176px;width:32px;height:16px;background:#ffe600"></div>
<div class="a" style="left:320px;top:176px;width:32px;height:16px;background:#ffcc00"></div>
<div class="a" style="left:352px;top:176px;width:32px;height:16px;background:#ffb200"></div>
<div class="a" style="left:384px;top:176px;width:32px;height:16px;background:#ff9900"></div>
<div class="a" style="left:416px;top:176px;width:32px;height:16px;background:#ff8000"></div>
<div class="a" style="left:448px;top:176px;width:32px;height:16px;background:#ff8000"></div>
<div class="a" style="left:480px;top:176px;width:32px;height:16px;background:#ff8000"></div>
<div class="a" style="left:0px;top:192px;width:32px;height:16px;background:#ff8000"></div>
<div class="a" style="left:32px;top:192px;width:32px;height:16px;background:#ff8000"></div>
<div class="a" style="left:64px;top:192px;width:32px;height:16px;background:#ff8000"></div>
<div class="a" style="left:96px;top:192px;width:32px;height:16px;background:#ff8000"></div>
<div class="a" style="left:128px;top:192px;width:32px;height:16px;background:#ffb200"></div>
<div class="a" style="left:160px;top:192px;width:32px;height:16px;background:#ffe600"></div>
<div class="a" style="left:192px;top:192px;width:32px;height:16px;background:#ffff00"></div>
<div class="a" style="left:224px;top:192px;width:32px;height:16px;background:#ffe600"></div>
<div class="a" style="left:256px;top:192px;width:32px;height:16px;background:#ffff00"></div>
<div class="a" style="left:288px;top:192px;width:32px;height:16px;background:#e4fd02"></div>
<div class="a" style="left:320px;top:192px;width:32px;height:16px;background:#ffe600"></div>
<div class="a" style="left:352px;top:192px;width:32px;height:16px;background:#ffff00"></div>
<div class="a" style="left:384px;top:192px;width:32px;height:16px;background:#ffff00"></div>
<div class="a" style="left:416px;top:192px;width:32px;height:16px;background:#ffe600"></div>
<div class="a" style="left:448px;top:192px;width:32px;height:16px;background:#ffe600"></div>
<div class="a" style="left:480px;top:192px;width:32px;height:16px;background:#ffe600"></div>
<div class="a" style="left:0px;top:208px;width:32px;height:16px;background:#ffb200"></div>
<div class="a" style="left:32px;top:208px;width:32px;height:16px;background:#ffb200"></div>
<div class="a" style="left:64px;top:208px;width:32px;height:16px;background:#ffb200"></div>
<div class="a" style="left:96px;top:208px;width:32px;height:16px;background:#ffb200"></div>
<div class="a" style="left:128px;top:208px;width:32px;height:16px;background:#ffcc00"></div>
<div class="a" style="left:160px;top:208px;width:32px;height:16px;background:#ffcc00"></div>
<div class="a" style="left:192px;top:208px;width:32px;height:16px;background:#ffe600"></div>
<div class="a" style="left:224px;top:208px;width:32px;height:16px;background:#ffff00"></div>
<div class="a" style="left:256px;top:208px;width:32px;height:16px;background:#e4fd02"></div>
<div class="a" style="left:288px;top:208px;width:32px;height:16px;background:#c9fb04"></div>
<div class="a" style="left:320px;top:208px;width:32px;height:16px;background:#ffe600"></div>
<div class="a" style="left:352px;top:208px;width:32px;height:16px;background:#ffff00"></div>
<div class="a" style="left:384px;top:208px;width:32px;height:16px;background:#e4fd02"></div>
<div class="a" style="left:416px;top:208px;width:32px;height:16px;background:#ffff00"></div>
<div class="a" style="left:448px;top:208px;width:32px;height:16px;background:#ffff00"></div>
<div class="a" style="left:480px;top:208px;width:32px;height:16px;background:#ffff00"></div>
<div class="a" style="left:0px;top:224px;width:32px;height:16px;background:#ffcc00"></div>
<div class="a" style="left:32px;top:224px;width:32px;height:16px;background:#ffcc00"></div>
<div class="a" style="left:64px;top:224px;width:32px;height:16px;background:#ffcc00"></div>
<div class="a" style="left:96px;top:224px;width:32px;height:16px;background:#ffcc00"></div>
<div class="a" style="left:128px;top:224px;width:32px;height:16px;background:#ffcc00"></div>
<div class="a" style="left:160px;top:224px;width:32px;height:16px;background:#ffcc00"></div>
<div class="a" style="left:192px;top:224px;width:32px;height:16px;background:#ffcc00"></div>
<div class="a" style="left:224px;top:224px;width:32px;height:16px;background:#ffcc00"></div>
<div class="a" style="left:256px;top:224px;width:32px;height:16px;background:#ffe600"></div>
<div class="a" style="left:288px;top:224px;width:32px;height:16px;background:#ffff00"></div>
<div class="a" style="left:320px;top:224px;width:32px;height:16px;background:#ffcc00"></div>
<div class="a" style="left:352px;top:224px;width:32px;height:16px;background:#ffff00"></div>
<div class="a" style="left:384px;top:224px;width:32px;height:16px;background:#e4fd02"></div>
<div class="a" style="left:416px;top:224px;width:32px;height:16px;background:#ffff00"></div>
<div class="a" style="left:448px;top:224px;width:32px;height:16px;background:#ffff00"></div>
<div class="a" style="left:480px;top:224px;width:32px;height:16px;background:#ffe600"></div>
<div class="a" style="left:0px;top:240px;width:32px;height:16px;background:#ffcc00"></div>
<div class="a" style="left:32px;top:240px;width:32px;height:16px;background:#ffcc00"></div>
<div class="a" style="left:64px;top:240px;width:32px;height:16px;background:#ffcc00"></div>
<div class="a" style="left:96px;top:240px;width:32px;height:16px;background:#ffcc00"></div>
<div class="a" style="left:128px;top:240px;width:32px;height:16px;background:#ffcc00"></div>
<div class="a" style="left:160px;top:240px;width:32px;height:16px;background:#ffcc00"></div>
<div class="a" style="left:192px;top:240px;width:32px;height:16px;background:#ffcc00"></div>
<div class="a" style="left:224px;top:240px;width:32px;height:16px;background:#ffe600"></div>
<div class="a" style="left:256px;top:240px;width:32px;height:16px;background:#ffcc00"></div>
<div class="a" style="left:288px;top:240px;width:32px;height:16px;background:#ffe600"></div>
<div class="a" style="left:320px;top:240px;width:32px;height:16px;background:#ffcc00"></div>
<div class="a" style="left:352px;top:240px;width:32px;height:16px;background:#ffff00"></div>
<div class="a" style="left:384px;top:240px;width:32px;height:16px;background:#ffcc00"></div>
<div class="a" style="left:416px;top:240px;width:32px;height:16px;background:#ffb200"></div>
<div class="a" style="left:448px;top:240px;width:32px;height:16px;background:#ffb200"></div>
<div class="a" style="left:480px;top:240px;width:32px;height:16px;background:#ffb200"></div>
</div></div>
<div class="cell" style="left:49.8px;top:42.8px;width:32px;height:16px;background:#bf8a9b;color:#3a2a30;letter-spacing:.3px">1.21</div>
<div class="cell" style="left:81.8px;top:42.8px;width:32px;height:16px;background:#ffb9cb;color:#3a2a30;letter-spacing:.3px">2.43</div>
<div class="cell" style="left:113.8px;top:42.8px;width:32px;height:16px;background:#bf8a9b;color:#3a2a30;letter-spacing:.3px">3.64</div>
<div class="cell" style="left:145.8px;top:42.8px;width:32px;height:16px;background:#ffb9cb;color:#3a2a30;letter-spacing:.3px">4.86</div>
<div class="cell" style="left:177.8px;top:42.8px;width:32px;height:16px;background:#bf8a9b;color:#3a2a30;letter-spacing:.3px">6.07</div>
<div class="cell" style="left:209.8px;top:42.8px;width:32px;height:16px;background:#ffb9cb;color:#3a2a30;letter-spacing:.3px">7.29</div>
<div class="cell" style="left:241.8px;top:42.8px;width:32px;height:16px;background:#bf8a9b;color:#3a2a30;letter-spacing:.3px">8.50</div>
<div class="cell" style="left:273.8px;top:42.8px;width:32px;height:16px;background:#ffb9cb;color:#3a2a30;letter-spacing:.3px">9.72</div>
<div class="cell" style="left:305.8px;top:42.8px;width:32px;height:16px;background:#bf8a9b;color:#3a2a30;letter-spacing:.3px">10.93</div>
<div class="cell" style="left:337.8px;top:42.8px;width:32px;height:16px;background:#ffb9cb;color:#3a2a30;letter-spacing:.3px">12.15</div>
<div class="cell" style="left:369.8px;top:42.8px;width:32px;height:16px;background:#bf8a9b;color:#3a2a30;letter-spacing:.3px">13.36</div>
<div class="cell" style="left:401.8px;top:42.8px;width:32px;height:16px;background:#ffb9cb;color:#3a2a30;letter-spacing:.3px">14.58</div>
<div class="cell" style="left:433.8px;top:42.8px;width:32px;height:16px;background:#bf8a9b;color:#3a2a30;letter-spacing:.3px">15.79</div>
<div class="cell" style="left:465.8px;top:42.8px;width:32px;height:16px;background:#ffb9cb;color:#3a2a30;letter-spacing:.3px">17.01</div>
<div class="cell" style="left:497.8px;top:42.8px;width:32px;height:16px;background:#bf8a9b;color:#3a2a30;letter-spacing:.3px">18.22</div>
<div class="cell" style="left:529.8px;top:42.8px;width:32px;height:16px;background:#ffb9cb;color:#3a2a30;letter-spacing:.3px">19.44</div>
<div class="cell" style="left:17.8px;top:58.8px;width:32px;height:16px;background:#5e8eaa;color:#1c2c38">400</div>
<div class="cell" style="left:17.8px;top:74.8px;width:32px;height:16px;background:#7cc6ea;color:#1c2c38">800</div>
<div class="cell" style="left:17.8px;top:90.8px;width:32px;height:16px;background:#5e8eaa;color:#1c2c38">1200</div>
<div class="cell" style="left:17.8px;top:106.8px;width:32px;height:16px;background:#7cc6ea;color:#1c2c38">1600</div>
<div class="cell" style="left:17.8px;top:122.8px;width:32px;height:16px;background:#5e8eaa;color:#1c2c38">2000</div>
<div class="cell" style="left:17.8px;top:138.8px;width:32px;height:16px;background:#7cc6ea;color:#1c2c38">2400</div>
<div class="cell" style="left:17.8px;top:154.8px;width:32px;height:16px;background:#5e8eaa;color:#1c2c38">2800</div>
<div class="cell" style="left:17.8px;top:170.8px;width:32px;height:16px;background:#7cc6ea;color:#1c2c38">3200</div>
<div class="cell" style="left:17.8px;top:186.8px;width:32px;height:16px;background:#5e8eaa;color:#1c2c38">3600</div>
<div class="cell" style="left:17.8px;top:202.8px;width:32px;height:16px;background:#7cc6ea;color:#1c2c38">4000</div>
<div class="cell" style="left:17.8px;top:218.8px;width:32px;height:16px;background:#5e8eaa;color:#1c2c38">4400</div>
<div class="cell" style="left:17.8px;top:234.8px;width:32px;height:16px;background:#7cc6ea;color:#1c2c38">4800</div>
<div class="cell" style="left:17.8px;top:250.8px;width:32px;height:16px;background:#5e8eaa;color:#1c2c38">5200</div>
<div class="cell" style="left:17.8px;top:266.8px;width:32px;height:16px;background:#7cc6ea;color:#1c2c38">5600</div>
<div class="cell" style="left:17.8px;top:282.8px;width:32px;height:16px;background:#5e8eaa;color:#1c2c38">6000</div>
<div class="cell" style="left:17.8px;top:298.8px;width:32px;height:16px;background:#7cc6ea;color:#1c2c38">6400</div>
<div class="a" style="left:17.8px;top:58.4px;width:544px;height:.9px;background:rgba(45,35,0,.72)"></div>
<div class="a" style="left:17.8px;top:74.39999999999999px;width:544px;height:.9px;background:rgba(45,35,0,.72)"></div>
<div class="a" style="left:17.8px;top:90.39999999999999px;width:544px;height:.9px;background:rgba(45,35,0,.72)"></div>
<div class="a" style="left:17.8px;top:106.39999999999999px;width:544px;height:.9px;background:rgba(45,35,0,.72)"></div>
<div class="a" style="left:17.8px;top:122.39999999999999px;width:544px;height:.9px;background:rgba(45,35,0,.72)"></div>
<div class="a" style="left:17.8px;top:138.4px;width:544px;height:.9px;background:rgba(45,35,0,.72)"></div>
<div class="a" style="left:17.8px;top:154.4px;width:544px;height:.9px;background:rgba(45,35,0,.72)"></div>
<div class="a" style="left:17.8px;top:170.4px;width:544px;height:.9px;background:rgba(45,35,0,.72)"></div>
<div class="a" style="left:17.8px;top:186.4px;width:544px;height:.9px;background:rgba(45,35,0,.72)"></div>
<div class="a" style="left:17.8px;top:202.4px;width:544px;height:.9px;background:rgba(45,35,0,.72)"></div>
<div class="a" style="left:17.8px;top:218.4px;width:544px;height:.9px;background:rgba(45,35,0,.72)"></div>
<div class="a" style="left:17.8px;top:234.4px;width:544px;height:.9px;background:rgba(45,35,0,.72)"></div>
<div class="a" style="left:17.8px;top:250.4px;width:544px;height:.9px;background:rgba(45,35,0,.72)"></div>
<div class="a" style="left:17.8px;top:266.40000000000003px;width:544px;height:.9px;background:rgba(45,35,0,.72)"></div>
<div class="a" style="left:17.8px;top:282.40000000000003px;width:544px;height:.9px;background:rgba(45,35,0,.72)"></div>
<div class="a" style="left:17.8px;top:298.40000000000003px;width:544px;height:.9px;background:rgba(45,35,0,.72)"></div>
<div class="a" style="left:17.8px;top:314.40000000000003px;width:544px;height:.9px;background:rgba(45,35,0,.72)"></div>
<div class="a" style="left:17.400000000000002px;top:58.8px;width:.9px;height:255.99999999999994px;background:rgba(45,35,0,.72)"></div>
<div class="a" style="left:49.4px;top:42.8px;width:.9px;height:271.99999999999994px;background:rgba(45,35,0,.72)"></div>
<div class="a" style="left:81.39999999999999px;top:42.8px;width:.9px;height:271.99999999999994px;background:rgba(45,35,0,.72)"></div>
<div class="a" style="left:113.39999999999999px;top:42.8px;width:.9px;height:271.99999999999994px;background:rgba(45,35,0,.72)"></div>
<div class="a" style="left:145.4px;top:42.8px;width:.9px;height:271.99999999999994px;background:rgba(45,35,0,.72)"></div>
<div class="a" style="left:177.4px;top:42.8px;width:.9px;height:271.99999999999994px;background:rgba(45,35,0,.72)"></div>
<div class="a" style="left:209.4px;top:42.8px;width:.9px;height:271.99999999999994px;background:rgba(45,35,0,.72)"></div>
<div class="a" style="left:241.4px;top:42.8px;width:.9px;height:271.99999999999994px;background:rgba(45,35,0,.72)"></div>
<div class="a" style="left:273.40000000000003px;top:42.8px;width:.9px;height:271.99999999999994px;background:rgba(45,35,0,.72)"></div>
<div class="a" style="left:305.40000000000003px;top:42.8px;width:.9px;height:271.99999999999994px;background:rgba(45,35,0,.72)"></div>
<div class="a" style="left:337.40000000000003px;top:42.8px;width:.9px;height:271.99999999999994px;background:rgba(45,35,0,.72)"></div>
<div class="a" style="left:369.40000000000003px;top:42.8px;width:.9px;height:271.99999999999994px;background:rgba(45,35,0,.72)"></div>
<div class="a" style="left:401.40000000000003px;top:42.8px;width:.9px;height:271.99999999999994px;background:rgba(45,35,0,.72)"></div>
<div class="a" style="left:433.40000000000003px;top:42.8px;width:.9px;height:271.99999999999994px;background:rgba(45,35,0,.72)"></div>
<div class="a" style="left:465.40000000000003px;top:42.8px;width:.9px;height:271.99999999999994px;background:rgba(45,35,0,.72)"></div>
<div class="a" style="left:497.40000000000003px;top:42.8px;width:.9px;height:271.99999999999994px;background:rgba(45,35,0,.72)"></div>
<div class="a" style="left:529.4px;top:42.8px;width:.9px;height:271.99999999999994px;background:rgba(45,35,0,.72)"></div>
<div class="a" style="left:561.4px;top:42.8px;width:.9px;height:271.99999999999994px;background:rgba(45,35,0,.72)"></div>
<div class="a" style="left:49.8px;top:42.4px;width:512px;height:.9px;background:rgba(45,35,0,.5)"></div>
<div class="cell" style="left:49.8px;top:58.8px;width:32px;height:16px">67</div>
<div class="cell" style="left:81.8px;top:58.8px;width:32px;height:16px">67</div>
<div class="cell" style="left:113.8px;top:58.8px;width:32px;height:16px">71</div>
<div class="cell" style="left:145.8px;top:58.8px;width:32px;height:16px">66</div>
<div class="cell" style="left:177.8px;top:58.8px;width:32px;height:16px">64</div>
<div class="cell" style="left:209.8px;top:58.8px;width:32px;height:16px">61</div>
<div class="cell" style="left:241.8px;top:58.8px;width:32px;height:16px">57</div>
<div class="cell" style="left:273.8px;top:58.8px;width:32px;height:16px">53</div>
<div class="cell" style="left:305.8px;top:58.8px;width:32px;height:16px">52</div>
<div class="cell" style="left:337.8px;top:58.8px;width:32px;height:16px">51</div>
<div class="cell" style="left:369.8px;top:58.8px;width:32px;height:16px">51</div>
<div class="cell" style="left:401.8px;top:58.8px;width:32px;height:16px">53</div>
<div class="cell" style="left:433.8px;top:58.8px;width:32px;height:16px">53</div>
<div class="cell" style="left:465.8px;top:58.8px;width:32px;height:16px">54</div>
<div class="cell" style="left:497.8px;top:58.8px;width:32px;height:16px">54</div>
<div class="cell" style="left:529.8px;top:58.8px;width:32px;height:16px">54</div>
<div class="cell" style="left:49.8px;top:74.8px;width:32px;height:16px">65</div>
<div class="cell" style="left:81.8px;top:74.8px;width:32px;height:16px">65</div>
<div class="cell" style="left:113.8px;top:74.8px;width:32px;height:16px">65</div>
<div class="cell" style="left:145.8px;top:74.8px;width:32px;height:16px">63</div>
<div class="cell" style="left:177.8px;top:74.8px;width:32px;height:16px">62</div>
<div class="cell" style="left:209.8px;top:74.8px;width:32px;height:16px">59</div>
<div class="cell" style="left:241.8px;top:74.8px;width:32px;height:16px">59</div>
<div class="cell" style="left:273.8px;top:74.8px;width:32px;height:16px">57</div>
<div class="cell" style="left:305.8px;top:74.8px;width:32px;height:16px">52</div>
<div class="cell" style="left:337.8px;top:74.8px;width:32px;height:16px">55</div>
<div class="cell" style="left:369.8px;top:74.8px;width:32px;height:16px">56</div>
<div class="cell" style="left:401.8px;top:74.8px;width:32px;height:16px">57</div>
<div class="cell" style="left:433.8px;top:74.8px;width:32px;height:16px">58</div>
<div class="cell" style="left:465.8px;top:74.8px;width:32px;height:16px">59</div>
<div class="cell" style="left:497.8px;top:74.8px;width:32px;height:16px">59</div>
<div class="cell" style="left:529.8px;top:74.8px;width:32px;height:16px">59</div>
<div class="cell" style="left:49.8px;top:90.8px;width:32px;height:16px">63</div>
<div class="cell" style="left:81.8px;top:90.8px;width:32px;height:16px">63</div>
<div class="cell" style="left:113.8px;top:90.8px;width:32px;height:16px">65</div>
<div class="cell" style="left:145.8px;top:90.8px;width:32px;height:16px">65</div>
<div class="cell" style="left:177.8px;top:90.8px;width:32px;height:16px">65</div>
<div class="cell" style="left:209.8px;top:90.8px;width:32px;height:16px">65</div>
<div class="cell" style="left:241.8px;top:90.8px;width:32px;height:16px">64</div>
<div class="cell" style="left:273.8px;top:90.8px;width:32px;height:16px">62</div>
<div class="cell" style="left:305.8px;top:90.8px;width:32px;height:16px">60</div>
<div class="cell" style="left:337.8px;top:90.8px;width:32px;height:16px">58</div>
<div class="cell" style="left:369.8px;top:90.8px;width:32px;height:16px">57</div>
<div class="cell" style="left:401.8px;top:90.8px;width:32px;height:16px">58</div>
<div class="cell" style="left:433.8px;top:90.8px;width:32px;height:16px">59</div>
<div class="cell" style="left:465.8px;top:90.8px;width:32px;height:16px">61</div>
<div class="cell" style="left:497.8px;top:90.8px;width:32px;height:16px">61</div>
<div class="cell" style="left:529.8px;top:90.8px;width:32px;height:16px">61</div>
<div class="cell" style="left:49.8px;top:106.8px;width:32px;height:16px">62</div>
<div class="cell" style="left:81.8px;top:106.8px;width:32px;height:16px">62</div>
<div class="cell" style="left:113.8px;top:106.8px;width:32px;height:16px">63</div>
<div class="cell" style="left:145.8px;top:106.8px;width:32px;height:16px">63</div>
<div class="cell" style="left:177.8px;top:106.8px;width:32px;height:16px">63</div>
<div class="cell" style="left:209.8px;top:106.8px;width:32px;height:16px">63</div>
<div class="cell" style="left:241.8px;top:106.8px;width:32px;height:16px">62</div>
<div class="cell" style="left:273.8px;top:106.8px;width:32px;height:16px">61</div>
<div class="cell" style="left:305.8px;top:106.8px;width:32px;height:16px">59</div>
<div class="cell" style="left:337.8px;top:106.8px;width:32px;height:16px">58</div>
<div class="cell" style="left:369.8px;top:106.8px;width:32px;height:16px">59</div>
<div class="cell" style="left:401.8px;top:106.8px;width:32px;height:16px">61</div>
<div class="cell" style="left:433.8px;top:106.8px;width:32px;height:16px">62</div>
<div class="cell" style="left:465.8px;top:106.8px;width:32px;height:16px">63</div>
<div class="cell" style="left:497.8px;top:106.8px;width:32px;height:16px">63</div>
<div class="cell" style="left:529.8px;top:106.8px;width:32px;height:16px">63</div>
<div class="cell" style="left:49.8px;top:122.8px;width:32px;height:16px">61</div>
<div class="cell" style="left:81.8px;top:122.8px;width:32px;height:16px">61</div>
<div class="cell" style="left:113.8px;top:122.8px;width:32px;height:16px">61</div>
<div class="cell" style="left:145.8px;top:122.8px;width:32px;height:16px">61</div>
<div class="cell" style="left:177.8px;top:122.8px;width:32px;height:16px">61</div>
<div class="cell" style="left:209.8px;top:122.8px;width:32px;height:16px">62</div>
<div class="cell" style="left:241.8px;top:122.8px;width:32px;height:16px">62</div>
<div class="cell" style="left:273.8px;top:122.8px;width:32px;height:16px">61</div>
<div class="cell" style="left:305.8px;top:122.8px;width:32px;height:16px">60</div>
<div class="cell" style="left:337.8px;top:122.8px;width:32px;height:16px">60</div>
<div class="cell" style="left:369.8px;top:122.8px;width:32px;height:16px">60</div>
<div class="cell" style="left:401.8px;top:122.8px;width:32px;height:16px">62</div>
<div class="cell" style="left:433.8px;top:122.8px;width:32px;height:16px">63</div>
<div class="cell" style="left:465.8px;top:122.8px;width:32px;height:16px">64</div>
<div class="cell" style="left:497.8px;top:122.8px;width:32px;height:16px">64</div>
<div class="cell" style="left:529.8px;top:122.8px;width:32px;height:16px">64</div>
<div class="cell" style="left:49.8px;top:138.8px;width:32px;height:16px">60</div>
<div class="cell" style="left:81.8px;top:138.8px;width:32px;height:16px">60</div>
<div class="cell" style="left:113.8px;top:138.8px;width:32px;height:16px">61</div>
<div class="cell" style="left:145.8px;top:138.8px;width:32px;height:16px">62</div>
<div class="cell" style="left:177.8px;top:138.8px;width:32px;height:16px">61</div>
<div class="cell" style="left:209.8px;top:138.8px;width:32px;height:16px">62</div>
<div class="cell" style="left:241.8px;top:138.8px;width:32px;height:16px">61</div>
<div class="cell" style="left:273.8px;top:138.8px;width:32px;height:16px">63</div>
<div class="cell" style="left:305.8px;top:138.8px;width:32px;height:16px">63</div>
<div class="cell" style="left:337.8px;top:138.8px;width:32px;height:16px">62</div>
<div class="cell" style="left:369.8px;top:138.8px;width:32px;height:16px">60</div>
<div class="cell" style="left:401.8px;top:138.8px;width:32px;height:16px">61</div>
<div class="cell" style="left:433.8px;top:138.8px;width:32px;height:16px">63</div>
<div class="cell" style="left:465.8px;top:138.8px;width:32px;height:16px">64</div>
<div class="cell" style="left:497.8px;top:138.8px;width:32px;height:16px">64</div>
<div class="cell" style="left:529.8px;top:138.8px;width:32px;height:16px">64</div>
<div class="cell" style="left:49.8px;top:154.8px;width:32px;height:16px">59</div>
<div class="cell" style="left:81.8px;top:154.8px;width:32px;height:16px">59</div>
<div class="cell" style="left:113.8px;top:154.8px;width:32px;height:16px">59</div>
<div class="cell" style="left:145.8px;top:154.8px;width:32px;height:16px">60</div>
<div class="cell" style="left:177.8px;top:154.8px;width:32px;height:16px">60</div>
<div class="cell" style="left:209.8px;top:154.8px;width:32px;height:16px">61</div>
<div class="cell" style="left:241.8px;top:154.8px;width:32px;height:16px">61</div>
<div class="cell" style="left:273.8px;top:154.8px;width:32px;height:16px">62</div>
<div class="cell" style="left:305.8px;top:154.8px;width:32px;height:16px">62</div>
<div class="cell" style="left:337.8px;top:154.8px;width:32px;height:16px">62</div>
<div class="cell" style="left:369.8px;top:154.8px;width:32px;height:16px">61</div>
<div class="cell" style="left:401.8px;top:154.8px;width:32px;height:16px">64</div>
<div class="cell" style="left:433.8px;top:154.8px;width:32px;height:16px">65</div>
<div class="cell" style="left:465.8px;top:154.8px;width:32px;height:16px">67</div>
<div class="cell" style="left:497.8px;top:154.8px;width:32px;height:16px">67</div>
<div class="cell" style="left:529.8px;top:154.8px;width:32px;height:16px">67</div>
<div class="cell" style="left:49.8px;top:170.8px;width:32px;height:16px">61</div>
<div class="cell" style="left:81.8px;top:170.8px;width:32px;height:16px">61</div>
<div class="cell" style="left:113.8px;top:170.8px;width:32px;height:16px">61</div>
<div class="cell" style="left:145.8px;top:170.8px;width:32px;height:16px">62</div>
<div class="cell" style="left:177.8px;top:170.8px;width:32px;height:16px">62</div>
<div class="cell" style="left:209.8px;top:170.8px;width:32px;height:16px">62</div>
<div class="cell" style="left:241.8px;top:170.8px;width:32px;height:16px">63</div>
<div class="cell" style="left:273.8px;top:170.8px;width:32px;height:16px">63</div>
<div class="cell" style="left:305.8px;top:170.8px;width:32px;height:16px">64</div>
<div class="cell" style="left:337.8px;top:170.8px;width:32px;height:16px">64</div>
<div class="cell" style="left:369.8px;top:170.8px;width:32px;height:16px">64</div>
<div class="cell" style="left:401.8px;top:170.8px;width:32px;height:16px">64</div>
<div class="cell" style="left:433.8px;top:170.8px;width:32px;height:16px">66</div>
<div class="cell" style="left:465.8px;top:170.8px;width:32px;height:16px">67</div>
<div class="cell" style="left:497.8px;top:170.8px;width:32px;height:16px">67</div>
<div class="cell" style="left:529.8px;top:170.8px;width:32px;height:16px">67</div>
<div class="cell" style="left:49.8px;top:186.8px;width:32px;height:16px">64</div>
<div class="cell" style="left:81.8px;top:186.8px;width:32px;height:16px">64</div>
<div class="cell" style="left:113.8px;top:186.8px;width:32px;height:16px">64</div>
<div class="cell" style="left:145.8px;top:186.8px;width:32px;height:16px">64</div>
<div class="cell" style="left:177.8px;top:186.8px;width:32px;height:16px">64</div>
<div class="cell" style="left:209.8px;top:186.8px;width:32px;height:16px">64</div>
<div class="cell" style="left:241.8px;top:186.8px;width:32px;height:16px">64</div>
<div class="cell" style="left:273.8px;top:186.8px;width:32px;height:16px">65</div>
<div class="cell" style="left:305.8px;top:186.8px;width:32px;height:16px">65</div>
<div class="cell" style="left:337.8px;top:186.8px;width:32px;height:16px">65</div>
<div class="cell" style="left:369.8px;top:186.8px;width:32px;height:16px">66</div>
<div class="cell" style="left:401.8px;top:186.8px;width:32px;height:16px">65</div>
<div class="cell" style="left:433.8px;top:186.8px;width:32px;height:16px">66</div>
<div class="cell" style="left:465.8px;top:186.8px;width:32px;height:16px">67</div>
<div class="cell" style="left:497.8px;top:186.8px;width:32px;height:16px">67</div>
<div class="cell" style="left:529.8px;top:186.8px;width:32px;height:16px">67</div>
<div class="cell" style="left:49.8px;top:202.8px;width:32px;height:16px">66</div>
<div class="cell" style="left:81.8px;top:202.8px;width:32px;height:16px">66</div>
<div class="cell" style="left:113.8px;top:202.8px;width:32px;height:16px">66</div>
<div class="cell" style="left:145.8px;top:202.8px;width:32px;height:16px">66</div>
<div class="cell" style="left:177.8px;top:202.8px;width:32px;height:16px">66</div>
<div class="cell" style="left:209.8px;top:202.8px;width:32px;height:16px">65</div>
<div class="cell" style="left:241.8px;top:202.8px;width:32px;height:16px">65</div>
<div class="cell" style="left:273.8px;top:202.8px;width:32px;height:16px">66</div>
<div class="cell" style="left:305.8px;top:202.8px;width:32px;height:16px">67</div>
<div class="cell" style="left:337.8px;top:202.8px;width:32px;height:16px">66</div>
<div class="cell" style="left:369.8px;top:202.8px;width:32px;height:16px">65</div>
<div class="cell" style="left:401.8px;top:202.8px;width:32px;height:16px">64</div>
<div class="cell" style="left:433.8px;top:202.8px;width:32px;height:16px">66</div>
<div class="cell" style="left:465.8px;top:202.8px;width:32px;height:16px">67</div>
<div class="cell" style="left:497.8px;top:202.8px;width:32px;height:16px">67</div>
<div class="cell" style="left:529.8px;top:202.8px;width:32px;height:16px">67</div>
<div class="cell" style="left:49.8px;top:218.8px;width:32px;height:16px">64</div>
<div class="cell" style="left:81.8px;top:218.8px;width:32px;height:16px">64</div>
<div class="cell" style="left:113.8px;top:218.8px;width:32px;height:16px">64</div>
<div class="cell" style="left:145.8px;top:218.8px;width:32px;height:16px">64</div>
<div class="cell" style="left:177.8px;top:218.8px;width:32px;height:16px">64</div>
<div class="cell" style="left:209.8px;top:218.8px;width:32px;height:16px">64</div>
<div class="cell" style="left:241.8px;top:218.8px;width:32px;height:16px">63</div>
<div class="cell" style="left:273.8px;top:218.8px;width:32px;height:16px">63</div>
<div class="cell" style="left:305.8px;top:218.8px;width:32px;height:16px">63</div>
<div class="cell" style="left:337.8px;top:218.8px;width:32px;height:16px">62</div>
<div class="cell" style="left:369.8px;top:218.8px;width:32px;height:16px">63</div>
<div class="cell" style="left:401.8px;top:218.8px;width:32px;height:16px">62</div>
<div class="cell" style="left:433.8px;top:218.8px;width:32px;height:16px">64</div>
<div class="cell" style="left:465.8px;top:218.8px;width:32px;height:16px">65</div>
<div class="cell" style="left:497.8px;top:218.8px;width:32px;height:16px">65</div>
<div class="cell" style="left:529.8px;top:218.8px;width:32px;height:16px">65</div>
<div class="cell" style="left:49.8px;top:234.8px;width:32px;height:16px">65</div>
<div class="cell" style="left:81.8px;top:234.8px;width:32px;height:16px">65</div>
<div class="cell" style="left:113.8px;top:234.8px;width:32px;height:16px">65</div>
<div class="cell" style="left:145.8px;top:234.8px;width:32px;height:16px">65</div>
<div class="cell" style="left:177.8px;top:234.8px;width:32px;height:16px">64</div>
<div class="cell" style="left:209.8px;top:234.8px;width:32px;height:16px">63</div>
<div class="cell" style="left:241.8px;top:234.8px;width:32px;height:16px">62</div>
<div class="cell" style="left:273.8px;top:234.8px;width:32px;height:16px">62</div>
<div class="cell" style="left:305.8px;top:234.8px;width:32px;height:16px">62</div>
<div class="cell" style="left:337.8px;top:234.8px;width:32px;height:16px">62</div>
<div class="cell" style="left:369.8px;top:234.8px;width:32px;height:16px">63</div>
<div class="cell" style="left:401.8px;top:234.8px;width:32px;height:16px">64</div>
<div class="cell" style="left:433.8px;top:234.8px;width:32px;height:16px">65</div>
<div class="cell" style="left:465.8px;top:234.8px;width:32px;height:16px">66</div>
<div class="cell" style="left:497.8px;top:234.8px;width:32px;height:16px">66</div>
<div class="cell" style="left:529.8px;top:234.8px;width:32px;height:16px">66</div>
<div class="cell" style="left:49.8px;top:250.8px;width:32px;height:16px">66</div>
<div class="cell" style="left:81.8px;top:250.8px;width:32px;height:16px">66</div>
<div class="cell" style="left:113.8px;top:250.8px;width:32px;height:16px">66</div>
<div class="cell" style="left:145.8px;top:250.8px;width:32px;height:16px">66</div>
<div class="cell" style="left:177.8px;top:250.8px;width:32px;height:16px">64</div>
<div class="cell" style="left:209.8px;top:250.8px;width:32px;height:16px">62</div>
<div class="cell" style="left:241.8px;top:250.8px;width:32px;height:16px">61</div>
<div class="cell" style="left:273.8px;top:250.8px;width:32px;height:16px">62</div>
<div class="cell" style="left:305.8px;top:250.8px;width:32px;height:16px">61</div>
<div class="cell" style="left:337.8px;top:250.8px;width:32px;height:16px">60</div>
<div class="cell" style="left:369.8px;top:250.8px;width:32px;height:16px">62</div>
<div class="cell" style="left:401.8px;top:250.8px;width:32px;height:16px">61</div>
<div class="cell" style="left:433.8px;top:250.8px;width:32px;height:16px">61</div>
<div class="cell" style="left:465.8px;top:250.8px;width:32px;height:16px">62</div>
<div class="cell" style="left:497.8px;top:250.8px;width:32px;height:16px">62</div>
<div class="cell" style="left:529.8px;top:250.8px;width:32px;height:16px">62</div>
<div class="cell" style="left:49.8px;top:266.8px;width:32px;height:16px">64</div>
<div class="cell" style="left:81.8px;top:266.8px;width:32px;height:16px">64</div>
<div class="cell" style="left:113.8px;top:266.8px;width:32px;height:16px">64</div>
<div class="cell" style="left:145.8px;top:266.8px;width:32px;height:16px">64</div>
<div class="cell" style="left:177.8px;top:266.8px;width:32px;height:16px">63</div>
<div class="cell" style="left:209.8px;top:266.8px;width:32px;height:16px">63</div>
<div class="cell" style="left:241.8px;top:266.8px;width:32px;height:16px">62</div>
<div class="cell" style="left:273.8px;top:266.8px;width:32px;height:16px">61</div>
<div class="cell" style="left:305.8px;top:266.8px;width:32px;height:16px">60</div>
<div class="cell" style="left:337.8px;top:266.8px;width:32px;height:16px">59</div>
<div class="cell" style="left:369.8px;top:266.8px;width:32px;height:16px">62</div>
<div class="cell" style="left:401.8px;top:266.8px;width:32px;height:16px">61</div>
<div class="cell" style="left:433.8px;top:266.8px;width:32px;height:16px">60</div>
<div class="cell" style="left:465.8px;top:266.8px;width:32px;height:16px">61</div>
<div class="cell" style="left:497.8px;top:266.8px;width:32px;height:16px">61</div>
<div class="cell" style="left:529.8px;top:266.8px;width:32px;height:16px">61</div>
<div class="cell" style="left:49.8px;top:282.8px;width:32px;height:16px">63</div>
<div class="cell" style="left:81.8px;top:282.8px;width:32px;height:16px">63</div>
<div class="cell" style="left:113.8px;top:282.8px;width:32px;height:16px">63</div>
<div class="cell" style="left:145.8px;top:282.8px;width:32px;height:16px">63</div>
<div class="cell" style="left:177.8px;top:282.8px;width:32px;height:16px">63</div>
<div class="cell" style="left:209.8px;top:282.8px;width:32px;height:16px">63</div>
<div class="cell" style="left:241.8px;top:282.8px;width:32px;height:16px">63</div>
<div class="cell" style="left:273.8px;top:282.8px;width:32px;height:16px">63</div>
<div class="cell" style="left:305.8px;top:282.8px;width:32px;height:16px">62</div>
<div class="cell" style="left:337.8px;top:282.8px;width:32px;height:16px">61</div>
<div class="cell" style="left:369.8px;top:282.8px;width:32px;height:16px">63</div>
<div class="cell" style="left:401.8px;top:282.8px;width:32px;height:16px">61</div>
<div class="cell" style="left:433.8px;top:282.8px;width:32px;height:16px">60</div>
<div class="cell" style="left:465.8px;top:282.8px;width:32px;height:16px">61</div>
<div class="cell" style="left:497.8px;top:282.8px;width:32px;height:16px">61</div>
<div class="cell" style="left:529.8px;top:282.8px;width:32px;height:16px">62</div>
<div class="cell" style="left:49.8px;top:298.8px;width:32px;height:16px">63</div>
<div class="cell" style="left:81.8px;top:298.8px;width:32px;height:16px">63</div>
<div class="cell" style="left:113.8px;top:298.8px;width:32px;height:16px">63</div>
<div class="cell" style="left:145.8px;top:298.8px;width:32px;height:16px">63</div>
<div class="cell" style="left:177.8px;top:298.8px;width:32px;height:16px">63</div>
<div class="cell" style="left:209.8px;top:298.8px;width:32px;height:16px">63</div>
<div class="cell" style="left:241.8px;top:298.8px;width:32px;height:16px">63</div>
<div class="cell" style="left:273.8px;top:298.8px;width:32px;height:16px">62</div>
<div class="cell" style="left:305.8px;top:298.8px;width:32px;height:16px">63</div>
<div class="cell" style="left:337.8px;top:298.8px;width:32px;height:16px">62</div>
<div class="cell" style="left:369.8px;top:298.8px;width:32px;height:16px">63</div>
<div class="cell" style="left:401.8px;top:298.8px;width:32px;height:16px">61</div>
<div class="cell" style="left:433.8px;top:298.8px;width:32px;height:16px">63</div>
<div class="cell" style="left:465.8px;top:298.8px;width:32px;height:16px">64</div>
<div class="cell" style="left:497.8px;top:298.8px;width:32px;height:16px">64</div>
<div class="cell" style="left:529.8px;top:298.8px;width:32px;height:16px">64</div>
<div class="a" style="left:432.9px;top:154.5px;width:129.4px;height:161px;border:2.2px solid #141008"></div>
<div class="a" style="left:2.5px;top:330.8px;width:559.5px;height:10.2px;background:linear-gradient(90deg,#1ee81a 0,#30f00c 10%,#9cf400 30%,#ffff00 47%,#ff9c00 67%,#ff5000 82%,#ff1000 96%,#f80000 100%)"></div>
</div></div>
<div class="a" style="left:0;top:686.3px;width:1152px;height:1.4px;background:#e4e4e4"></div>
<div class="a" style="left:0;top:687.6px;width:1152px;height:32.4px;background:#0e1317">
<svg class="a" style="left:12.5px;top:9.9px" width="13" height="13" viewBox="0 0 13 13" fill="#fff"><path d="M0 1.8l5.3-.8v5.2H0zM6 .9L13 0v6.2H6zM0 6.9h5.3v5.2L0 11.3zM6 6.9h7V13l-7-1z"/></svg>
<div class="a" style="left:38.5px;top:0.0px;width:275.3px;height:32.4px;background:#f3f3f3">
<div class="a" style="left:7.5px;top:8.2px;width:16px;height:16px;border:2px solid #111;border-radius:50%"></div>
<div class="t" style="left:32.2px;top:11.8px;font-size:11px;color:#505050">Type here to search</div>
<svg class="a" style="left:254px;top:9px" width="9" height="15" viewBox="0 0 9 15" fill="none" stroke="#555" stroke-width="1"><rect x="2.5" y=".5" width="4" height="8.5" rx="2"/><path d="M.7 7.5c0 5 7.6 5 7.6 0M4.5 11.3V14M2.5 14.2h4"/></svg>
</div>
<svg class="a" style="left:325.5px;top:9.9px" width="15" height="13" viewBox="0 0 15 13" fill="none" stroke="#fff" stroke-width="1.5"><rect x="1.5" y="3" width="7" height="7"/><path d="M.5 1h9M.5 12h9M11.5 2.5v8M14 3.5v1.5M14 7v3.5" /></svg>
<svg class="a" style="left:365.5px;top:7.4px" width="17" height="18" viewBox="0 0 16 18"><path d="M.8 10C.8 4.500 4.500 1 8.800 1c4.200 0 6.700 3 6.700 7v2H5.300c.2 2.600 2 4 4.700 4 2 0 3.500-.5 5-1.500v3.500c-1.500 1-3.500 1.500-6 1.500C4 17.500.8 14.500.8 10zM5.400 7.300h5.800c0-2-1-3.300-2.800-3.300s-2.800 1.300-3 3.300z" fill="#1e86e4"/></svg>
<div class="a" style="left:357px;top:30.4px;width:34px;height:2px;background:#76b9ed"></div>
<svg class="a" style="left:403.5px;top:9.4px" width="17" height="14" viewBox="0 0 17 14"><path d="M0 1h6l1.5 1.5H17V13H0z" fill="#f5c84a"/><path d="M0 5h17v8.5H0z" fill="#fbe08a"/><rect x="4.5" y="8" width="8" height="5.5" fill="#4a9be0"/><rect x="6.5" y="10" width="4" height="3.5" fill="#fbe08a"/></svg>
<div class="a" style="left:433.5px;top:0;width:38px;height:32.4px;background:#2f3439"></div>
<div class="a" style="left:433.5px;top:30.4px;width:38px;height:2px;background:#76b9ed"></div>
<svg class="a" style="left:443px;top:8.9px" width="18" height="15" viewBox="0 0 18 15"><rect width="18" height="15" rx="1.5" fill="#3a1212"/><rect x="1.5" y="1.5" width="15" height="12" fill="#c01414"/><path d="M3 3h9l3 4.5-3 4.5H3z" fill="#ff2a2a"/></svg>
<svg class="a" style="left:952px;top:9.4px" width="15" height="14" viewBox="0 0 15 14" fill="none" stroke="#fff" stroke-width="1.1"><circle cx="10" cy="3.5" r="2.3"/><circle cx="4.5" cy="6.5" r="1.8"/><path d="M6.5 11.5c0-5 7.5-5 7.5 0M1 13c0-4 7-4 7 0"/></svg>
<svg class="a" style="left:983px;top:13.4px" width="11" height="7" viewBox="0 0 11 7" fill="none" stroke="#fff" stroke-width="1.2"><path d="M1 6l4.5-4.5L10 6"/></svg>
<svg class="a" style="left:1000px;top:11.4px" width="15" height="10" viewBox="0 0 15 10"><rect x="2" y="1.5" width="12" height="7" fill="none" stroke="#fff" stroke-width="1.1"/><rect x="0" y="3.5" width="2" height="3" fill="#fff"/><rect x="5" y="3" width="8" height="4" fill="#fff"/><path d="M3 0l3 3" stroke="#fff" stroke-width="1"/></svg>
<svg class="a" style="left:1020px;top:10.4px" width="15" height="12" viewBox="0 0 15 12" fill="none" stroke="#fff" stroke-width="1.1"><rect x="4" y="1" width="10" height="7"/><path d="M7 11h5M9.5 8v3"/><rect x=".6" y="5" width="3.5" height="6" fill="#0f1418"/><path d="M1 7h2.5"/></svg>
<svg class="a" style="left:1039.5px;top:10.9px" width="15" height="11" viewBox="0 0 15 11" fill="none" stroke="#fff" stroke-width="1.1"><path d="M1 3.8h2.5L7 1v9L3.5 7.2H1z"/><path d="M9.3 3.5c1 1 1 3 0 4M11.3 2c2 2 2 5 0 7"/></svg>
<div class="t" style="left:1052px;width:60px;text-align:center;top:5.4px;font-size:9.6px;color:#fff">3:39 PM</div>
<div class="t" style="left:1052px;width:60px;text-align:center;top:19.7px;font-size:9.6px;color:#fff">3/19/2019</div>
<svg class="a" style="left:1119px;top:9.9px" width="14" height="13" viewBox="0 0 14 13" fill="none" stroke="#fff" stroke-width="1.1"><path d="M1 1h12v8.5H7.5L4.5 12V9.5H1z"/></svg>
</div>
<svg class="a" style="left:744px;top:594.5px" width="11" height="17" viewBox="0 0 11 17"><path d="M.7.8v12.6l2.9-2.8 2 4.7 1.9-.8-2-4.6h4z" fill="#fff" stroke="#444" stroke-width=".8" stroke-linejoin="round"/></svg>
</div></body></html>
